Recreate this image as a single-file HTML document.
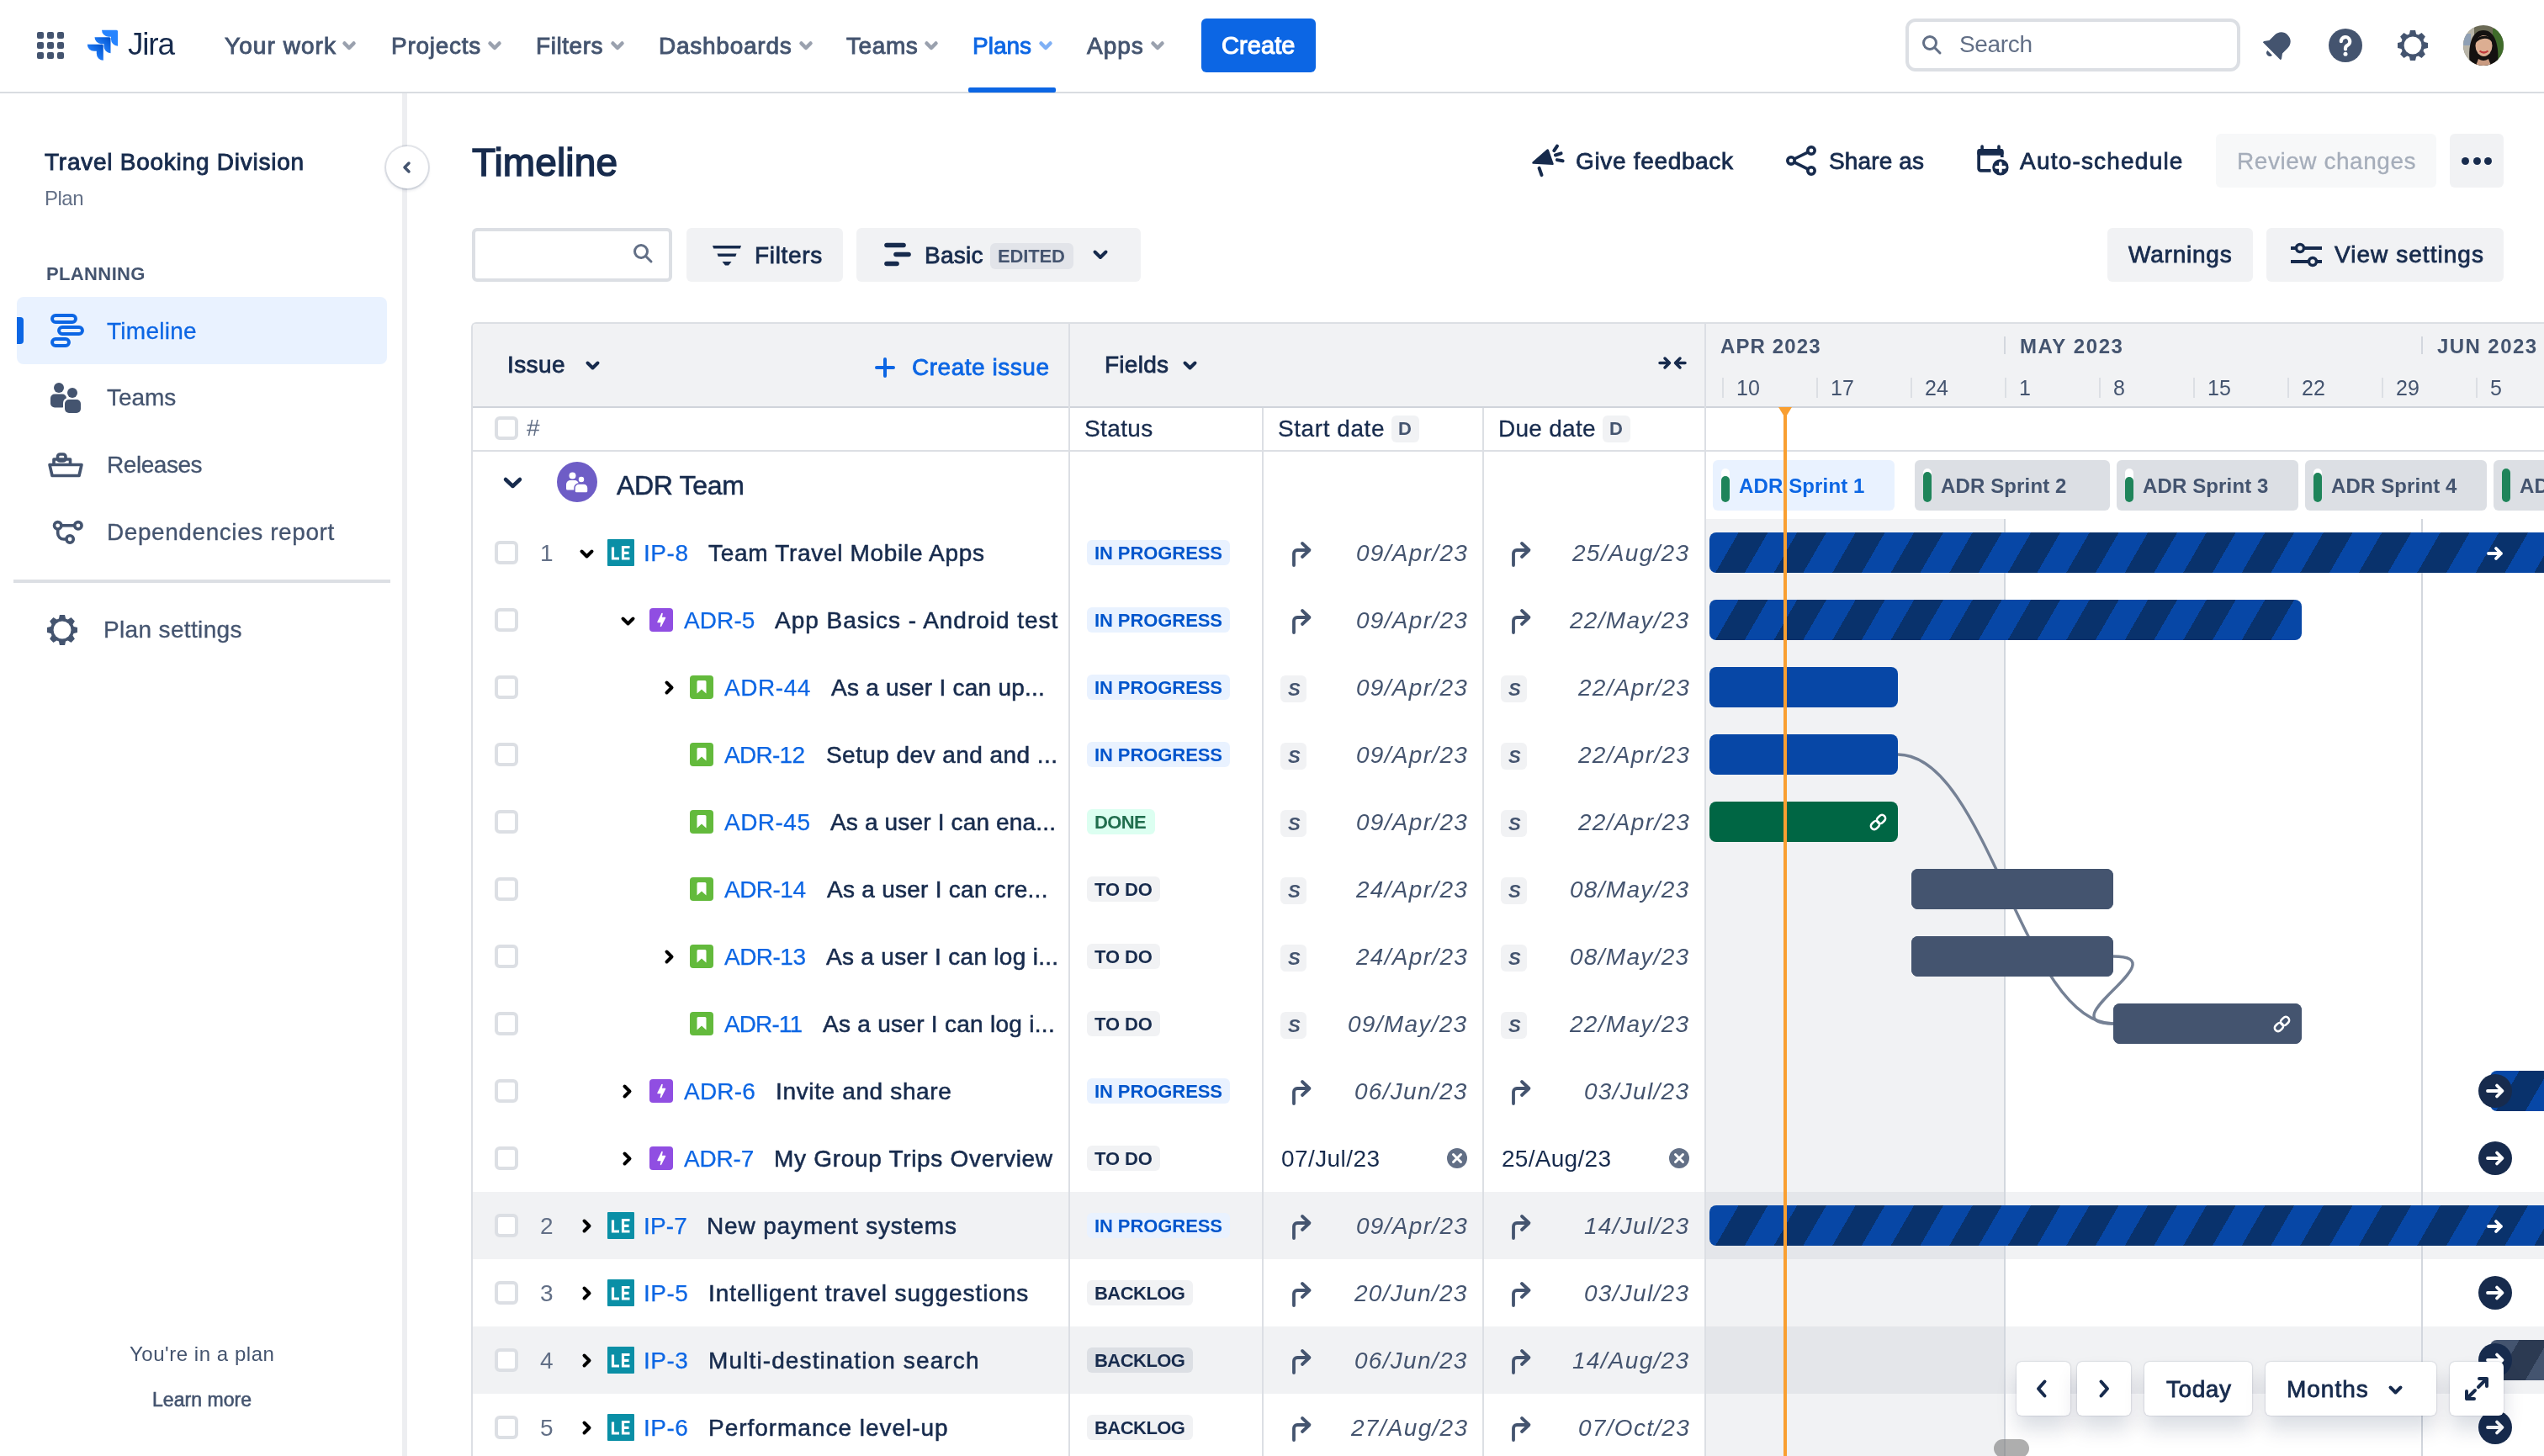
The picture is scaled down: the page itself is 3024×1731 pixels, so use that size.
<!DOCTYPE html>
<html><head><meta charset="utf-8"><title>Timeline - Jira</title>
<style>
html,body{margin:0;padding:0;}
body{width:3024px;height:1731px;overflow:hidden;position:relative;background:#ffffff;font-family:"Liberation Sans", sans-serif;}
div,svg{box-sizing:border-box;}
.t{will-change:transform;}
@media (max-width:1700px){html{zoom:0.5;}}
</style></head><body>
<div style="position:absolute;left:0px;top:109px;width:3024px;height:2px;background:#d9dce1;border-radius:0px;"></div>
<div style="position:absolute;left:44px;top:38px;width:8px;height:8px;background:#44546f;border-radius:2px;"></div>
<div style="position:absolute;left:56px;top:38px;width:8px;height:8px;background:#44546f;border-radius:2px;"></div>
<div style="position:absolute;left:68px;top:38px;width:8px;height:8px;background:#44546f;border-radius:2px;"></div>
<div style="position:absolute;left:44px;top:50px;width:8px;height:8px;background:#44546f;border-radius:2px;"></div>
<div style="position:absolute;left:56px;top:50px;width:8px;height:8px;background:#44546f;border-radius:2px;"></div>
<div style="position:absolute;left:68px;top:50px;width:8px;height:8px;background:#44546f;border-radius:2px;"></div>
<div style="position:absolute;left:44px;top:62px;width:8px;height:8px;background:#44546f;border-radius:2px;"></div>
<div style="position:absolute;left:56px;top:62px;width:8px;height:8px;background:#44546f;border-radius:2px;"></div>
<div style="position:absolute;left:68px;top:62px;width:8px;height:8px;background:#44546f;border-radius:2px;"></div>
<svg style="position:absolute;left:104px;top:36px;overflow:visible;" width="36" height="36" viewBox="0 0 36 36"><defs><linearGradient id="jg1" x1="1" y1="0.1" x2="0.35" y2="0.75"><stop offset="0" stop-color="#0052cc"/><stop offset="1" stop-color="#2684ff"/></linearGradient></defs>
<path d="M19 0 H0 a8 8 0 0 0 8 8 h3 v3 a8 8 0 0 0 8 8 V1.5 A1.5 1.5 0 0 0 17.5 0z" fill="#2684ff" transform="translate(17,-0.3)"/>
<path d="M19 0 H0 a8 8 0 0 0 8 8 h3 v3 a8 8 0 0 0 8 8 V1.5 A1.5 1.5 0 0 0 17.5 0z" fill="url(#jg1)" transform="translate(8.5,8.2)"/>
<path d="M19 0 H0 a8 8 0 0 0 8 8 h3 v3 a8 8 0 0 0 8 8 V1.5 A1.5 1.5 0 0 0 17.5 0z" fill="url(#jg1)" transform="translate(-0.2,16.8)"/></svg>
<div class="t" style="position:absolute;left:152.0px;top:29.2px;line-height:48px;font-size:37px;font-weight:400;font-style:normal;color:#172b4d;letter-spacing:-1.21px;white-space:pre;">Jira</div>
<div class="t" style="position:absolute;left:267.0px;top:36.8px;line-height:36px;font-size:28px;font-weight:400;font-style:normal;color:#44546f;letter-spacing:1.06px;white-space:pre;-webkit-text-stroke:0.9px #44546f;">Your work</div>
<svg style="position:absolute;left:407px;top:49px;overflow:visible;" width="16" height="12" viewBox="0 0 16 12"><path d="M2.5 2.5 L8 8 L13.5 2.5" fill="none" stroke="#9aa1ae" stroke-width="4.5" stroke-linecap="round" stroke-linejoin="round"/></svg>
<div class="t" style="position:absolute;left:464.5px;top:36.8px;line-height:36px;font-size:28px;font-weight:400;font-style:normal;color:#44546f;letter-spacing:0.73px;white-space:pre;-webkit-text-stroke:0.9px #44546f;">Projects</div>
<svg style="position:absolute;left:580px;top:49px;overflow:visible;" width="16" height="12" viewBox="0 0 16 12"><path d="M2.5 2.5 L8 8 L13.5 2.5" fill="none" stroke="#9aa1ae" stroke-width="4.5" stroke-linecap="round" stroke-linejoin="round"/></svg>
<div class="t" style="position:absolute;left:637.4px;top:36.8px;line-height:36px;font-size:28px;font-weight:400;font-style:normal;color:#44546f;letter-spacing:0.56px;white-space:pre;-webkit-text-stroke:0.9px #44546f;">Filters</div>
<svg style="position:absolute;left:726px;top:49px;overflow:visible;" width="16" height="12" viewBox="0 0 16 12"><path d="M2.5 2.5 L8 8 L13.5 2.5" fill="none" stroke="#9aa1ae" stroke-width="4.5" stroke-linecap="round" stroke-linejoin="round"/></svg>
<div class="t" style="position:absolute;left:782.7px;top:36.8px;line-height:36px;font-size:28px;font-weight:400;font-style:normal;color:#44546f;letter-spacing:0.75px;white-space:pre;-webkit-text-stroke:0.9px #44546f;">Dashboards</div>
<svg style="position:absolute;left:949.5px;top:49px;overflow:visible;" width="16" height="12" viewBox="0 0 16 12"><path d="M2.5 2.5 L8 8 L13.5 2.5" fill="none" stroke="#9aa1ae" stroke-width="4.5" stroke-linecap="round" stroke-linejoin="round"/></svg>
<div class="t" style="position:absolute;left:1006.0px;top:36.8px;line-height:36px;font-size:28px;font-weight:400;font-style:normal;color:#44546f;letter-spacing:0.58px;white-space:pre;-webkit-text-stroke:0.9px #44546f;">Teams</div>
<svg style="position:absolute;left:1099px;top:49px;overflow:visible;" width="16" height="12" viewBox="0 0 16 12"><path d="M2.5 2.5 L8 8 L13.5 2.5" fill="none" stroke="#9aa1ae" stroke-width="4.5" stroke-linecap="round" stroke-linejoin="round"/></svg>
<div class="t" style="position:absolute;left:1156.0px;top:36.8px;line-height:36px;font-size:28px;font-weight:400;font-style:normal;color:#0c66e4;letter-spacing:-0.01px;white-space:pre;-webkit-text-stroke:0.9px #0c66e4;">Plans</div>
<svg style="position:absolute;left:1235px;top:49px;overflow:visible;" width="16" height="12" viewBox="0 0 16 12"><path d="M2.5 2.5 L8 8 L13.5 2.5" fill="none" stroke="#7fb0f5" stroke-width="4.5" stroke-linecap="round" stroke-linejoin="round"/></svg>
<div class="t" style="position:absolute;left:1292.0px;top:36.8px;line-height:36px;font-size:28px;font-weight:400;font-style:normal;color:#44546f;letter-spacing:0.96px;white-space:pre;-webkit-text-stroke:0.9px #44546f;">Apps</div>
<svg style="position:absolute;left:1368px;top:49px;overflow:visible;" width="16" height="12" viewBox="0 0 16 12"><path d="M2.5 2.5 L8 8 L13.5 2.5" fill="none" stroke="#9aa1ae" stroke-width="4.5" stroke-linecap="round" stroke-linejoin="round"/></svg>
<div style="position:absolute;left:1151px;top:104px;width:104px;height:6px;background:#0c66e4;border-radius:2px;"></div>
<div style="position:absolute;left:1428px;top:22px;width:136px;height:64px;background:#0c66e4;border-radius:6px;"></div>
<div class="t" style="position:absolute;left:1451.6px;top:34.9px;line-height:38px;font-size:29px;font-weight:400;font-style:normal;color:#ffffff;letter-spacing:0.07px;white-space:pre;-webkit-text-stroke:1.1px #ffffff;">Create</div>
<div style="position:absolute;left:2265px;top:22px;width:398px;height:63px;border:4px solid #dcdfe4;border-radius:12px;background:#fff"></div>
<svg style="position:absolute;left:2284px;top:41px;overflow:visible;" width="24" height="24" viewBox="0 0 24 24"><circle cx="10" cy="10" r="7.5" fill="none" stroke="#626f86" stroke-width="3"/><path d="M15.5 15.5 L22 22" stroke="#626f86" stroke-width="3" stroke-linecap="round"/></svg>
<div class="t" style="position:absolute;left:2328.7px;top:35.3px;line-height:36px;font-size:28px;font-weight:400;font-style:normal;color:#626f86;letter-spacing:-0.34px;white-space:pre;">Search</div>
<svg style="position:absolute;left:2686px;top:33px;overflow:visible;" width="42" height="42" viewBox="0 0 42 42"><g transform="rotate(45 21 21)" fill="#44546f"><path d="M21 3.5c-6.8 0-11 5-11 11.5v8.5l-3.8 5.2v1.8h29.6v-1.8l-3.8-5.2v-8.5C32 8.5 27.8 3.5 21 3.5z"/><path d="M17 33.5 h8 a4 4 0 0 1 -8 0z"/></g></svg>
<svg style="position:absolute;left:2768px;top:34px;overflow:visible;" width="40" height="40" viewBox="0 0 40 40"><circle cx="20" cy="20" r="20" fill="#44546f"/><path d="M14.8 15.2a5.2 5.2 0 1 1 7.6 4.6c-1.5.8-2.4 1.6-2.4 3.4v1.2" fill="none" stroke="#fff" stroke-width="4.2" stroke-linecap="round"/><circle cx="20" cy="30.2" r="2.5" fill="#fff"/></svg>
<svg style="position:absolute;left:2849.5px;top:35.5px;overflow:visible;" width="36" height="36" viewBox="0 0 36 36"><g transform="translate(18.0,18.0)"><path d="M-4.68 -10.80 L-3.06 -18.00 H3.06 L4.68 -10.80Z" fill="#44546f" transform="rotate(0)"/><path d="M-4.68 -10.80 L-3.06 -18.00 H3.06 L4.68 -10.80Z" fill="#44546f" transform="rotate(45)"/><path d="M-4.68 -10.80 L-3.06 -18.00 H3.06 L4.68 -10.80Z" fill="#44546f" transform="rotate(90)"/><path d="M-4.68 -10.80 L-3.06 -18.00 H3.06 L4.68 -10.80Z" fill="#44546f" transform="rotate(135)"/><path d="M-4.68 -10.80 L-3.06 -18.00 H3.06 L4.68 -10.80Z" fill="#44546f" transform="rotate(180)"/><path d="M-4.68 -10.80 L-3.06 -18.00 H3.06 L4.68 -10.80Z" fill="#44546f" transform="rotate(225)"/><path d="M-4.68 -10.80 L-3.06 -18.00 H3.06 L4.68 -10.80Z" fill="#44546f" transform="rotate(270)"/><path d="M-4.68 -10.80 L-3.06 -18.00 H3.06 L4.68 -10.80Z" fill="#44546f" transform="rotate(315)"/><circle r="14.04" fill="#44546f"/><circle r="10.44" fill="#fff"/></g></svg>
<svg style="position:absolute;left:2928px;top:30px;overflow:visible;" width="48" height="48" viewBox="0 0 48 48"><defs><clipPath id="av"><circle cx="24" cy="24" r="24"/></clipPath></defs><g clip-path="url(#av)"><rect width="48" height="48" fill="#6b6a55"/><rect x="0" y="0" width="13" height="48" fill="#b9b5a8"/><rect x="0" y="10" width="9" height="14" fill="#8fa0b5"/><rect x="35" y="4" width="13" height="40" fill="#3f6b2a"/><path d="M8 48 C5 24 10 6 24 6 C38 6 43 24 41 48z" fill="#141110"/><ellipse cx="24.5" cy="24.5" rx="10" ry="12.5" fill="#dcae92"/><path d="M14 22 C14 11 34 9 35 21 C31 14 20 14 14 22z" fill="#141110"/><path d="M19.5 30.5 Q24.5 34.5 29.5 30.5" stroke="#c0393b" stroke-width="2.2" fill="none"/><path d="M18 40 Q24 44 30 40 L33 48 H15z" fill="#c99a80"/></g></svg>
<div style="position:absolute;left:478px;top:111px;width:6px;height:1620px;background:#edeef1;border-radius:0px;"></div>
<div class="t" style="position:absolute;left:53.0px;top:174.9px;line-height:36px;font-size:28px;font-weight:400;font-style:normal;color:#172b4d;letter-spacing:0.75px;white-space:pre;-webkit-text-stroke:0.9px #172b4d;">Travel Booking Division</div>
<div class="t" style="position:absolute;left:53.0px;top:220.2px;line-height:31px;font-size:24px;font-weight:400;font-style:normal;color:#626f86;letter-spacing:-0.52px;white-space:pre;">Plan</div>
<div class="t" style="position:absolute;left:55.0px;top:310.9px;line-height:29px;font-size:22px;font-weight:700;font-style:normal;color:#44546f;letter-spacing:0.37px;white-space:pre;">PLANNING</div>
<div style="position:absolute;left:20px;top:353px;width:440px;height:80px;background:#e9f2ff;border-radius:8px;"></div>
<div style="position:absolute;left:20px;top:377px;width:8px;height:32px;background:#0c66e4;border-radius:3px;border-radius:0 4px 4px 0;"></div>
<svg style="position:absolute;left:60px;top:373px;overflow:visible;" width="36" height="40" viewBox="0 0 36 40"><g fill="none" stroke="#0c66e4" stroke-width="3.9"><rect x="2" y="2" width="28" height="8" rx="4"/><rect x="10" y="16" width="28" height="8" rx="4"/><rect x="2" y="30" width="20" height="8" rx="4"/></g></svg>
<div class="t" style="position:absolute;left:127.0px;top:375.7px;line-height:36px;font-size:28px;font-weight:400;font-style:normal;color:#0c66e4;letter-spacing:0.26px;white-space:pre;-webkit-text-stroke:0.3px #0c66e4;">Timeline</div>
<svg style="position:absolute;left:58px;top:452px;overflow:visible;" width="40" height="40" viewBox="0 0 40 40"><g fill="#44546f"><circle cx="12" cy="9" r="6"/><rect x="2" y="16.5" width="19" height="16" rx="5"/><circle cx="28" cy="15" r="6"/></g><rect x="17" y="21" width="23" height="19" rx="6" fill="#fff"/><rect x="19" y="23" width="19" height="16" rx="5" fill="#44546f"/></svg>
<div class="t" style="position:absolute;left:126.6px;top:455.3px;line-height:36px;font-size:28px;font-weight:400;font-style:normal;color:#44546f;letter-spacing:-0.04px;white-space:pre;-webkit-text-stroke:0.3px #44546f;">Teams</div>
<svg style="position:absolute;left:56px;top:536px;overflow:visible;" width="44" height="34" viewBox="0 0 44 34"><g fill="none" stroke="#44546f" stroke-width="3.6" stroke-linejoin="round"><rect x="12.5" y="4" width="9.5" height="8" rx="3"/><path d="M8 16 V10 H27.5 V16"/><path d="M3 16.5 H41 L38 29.5 H6 Z"/></g></svg>
<div class="t" style="position:absolute;left:126.6px;top:535.3px;line-height:36px;font-size:28px;font-weight:400;font-style:normal;color:#44546f;letter-spacing:-0.45px;white-space:pre;-webkit-text-stroke:0.3px #44546f;">Releases</div>
<svg style="position:absolute;left:60px;top:616px;overflow:visible;" width="40" height="32" viewBox="0 0 40 32"><g fill="none" stroke="#44546f" stroke-width="3.6"><circle cx="8.7" cy="8.8" r="4.2"/><circle cx="32.9" cy="8.8" r="4.2"/><circle cx="23.1" cy="25" r="4.2"/><path d="M12.9 8.8 H28.7"/><path d="M8.7 13 V18 a7 7 0 0 0 7 7 H18.9"/></g></svg>
<div class="t" style="position:absolute;left:126.6px;top:615.3px;line-height:36px;font-size:28px;font-weight:400;font-style:normal;color:#44546f;letter-spacing:0.57px;white-space:pre;-webkit-text-stroke:0.3px #44546f;">Dependencies report</div>
<div style="position:absolute;left:16px;top:689px;width:448px;height:4px;background:#dcdfe4;border-radius:0px;"></div>
<svg style="position:absolute;left:55.6px;top:731px;overflow:visible;" width="36" height="36" viewBox="0 0 36 36"><g transform="translate(18.0,18.0)"><path d="M-4.68 -10.80 L-3.06 -18.00 H3.06 L4.68 -10.80Z" fill="#44546f" transform="rotate(0)"/><path d="M-4.68 -10.80 L-3.06 -18.00 H3.06 L4.68 -10.80Z" fill="#44546f" transform="rotate(45)"/><path d="M-4.68 -10.80 L-3.06 -18.00 H3.06 L4.68 -10.80Z" fill="#44546f" transform="rotate(90)"/><path d="M-4.68 -10.80 L-3.06 -18.00 H3.06 L4.68 -10.80Z" fill="#44546f" transform="rotate(135)"/><path d="M-4.68 -10.80 L-3.06 -18.00 H3.06 L4.68 -10.80Z" fill="#44546f" transform="rotate(180)"/><path d="M-4.68 -10.80 L-3.06 -18.00 H3.06 L4.68 -10.80Z" fill="#44546f" transform="rotate(225)"/><path d="M-4.68 -10.80 L-3.06 -18.00 H3.06 L4.68 -10.80Z" fill="#44546f" transform="rotate(270)"/><path d="M-4.68 -10.80 L-3.06 -18.00 H3.06 L4.68 -10.80Z" fill="#44546f" transform="rotate(315)"/><circle r="14.04" fill="#44546f"/><circle r="10.44" fill="#fff"/></g></svg>
<div class="t" style="position:absolute;left:122.7px;top:731.3px;line-height:36px;font-size:28px;font-weight:400;font-style:normal;color:#44546f;letter-spacing:0.35px;white-space:pre;-webkit-text-stroke:0.3px #44546f;">Plan settings</div>
<div class="t" style="position:absolute;left:154.0px;top:1594.0px;line-height:31px;font-size:24px;font-weight:400;font-style:normal;color:#44546f;letter-spacing:0.54px;white-space:pre;">You're in a plan</div>
<div class="t" style="position:absolute;left:181.0px;top:1648.7px;line-height:30px;font-size:23px;font-weight:400;font-style:normal;color:#44546f;letter-spacing:0.04px;white-space:pre;-webkit-text-stroke:0.6px #44546f;">Learn more</div>
<div style="position:absolute;left:459px;top:174px;width:50px;height:50px;border-radius:25px;background:#fff;box-shadow:0 0 0 2px rgba(9,30,66,0.10),0 2px 4px rgba(9,30,66,0.15)"></div>
<svg style="position:absolute;left:476px;top:191px;overflow:visible;" width="16" height="16" viewBox="0 0 16 16"><path d="M10 3 L5 8 L10 13" fill="none" stroke="#44546f" stroke-width="3.5" stroke-linecap="round" stroke-linejoin="round"/></svg>
<div class="t" style="position:absolute;left:561.0px;top:162.5px;line-height:60px;font-size:46px;font-weight:400;font-style:normal;color:#172b4d;letter-spacing:0.12px;white-space:pre;-webkit-text-stroke:1.5px #172b4d;">Timeline</div>
<svg style="position:absolute;left:1810px;top:160px;overflow:visible;" width="60" height="60" viewBox="0 0 60 60"><path d="M12.5 33.5 L29.7 18.5 L35.5 34.8 Z" fill="#172b4d" stroke="#172b4d" stroke-width="2.5" stroke-linejoin="round"/><g stroke="#172b4d" stroke-width="4" stroke-linecap="round"><path d="M19.6 39.8 L22.5 48.2"/><path d="M41 13.6 L37.3 19.2"/><path d="M38.9 24.5 L45.6 22.3"/><path d="M40.9 30.1 L47.6 31.3"/></g></svg>
<div class="t" style="position:absolute;left:1873.0px;top:173.9px;line-height:36px;font-size:28px;font-weight:400;font-style:normal;color:#172b4d;letter-spacing:0.67px;white-space:pre;-webkit-text-stroke:0.8px #172b4d;">Give feedback</div>
<svg style="position:absolute;left:2110px;top:160px;overflow:visible;" width="60" height="60" viewBox="0 0 60 60"><g fill="none" stroke="#172b4d" stroke-width="3.6"><circle cx="43" cy="19" r="4.2"/><circle cx="19" cy="30.9" r="4.2"/><circle cx="43" cy="43" r="4.2"/><path d="M22.8 29 L39.2 20.9"/><path d="M22.8 32.8 L39.2 41.1"/></g></svg>
<div class="t" style="position:absolute;left:2174.0px;top:173.9px;line-height:36px;font-size:28px;font-weight:400;font-style:normal;color:#172b4d;letter-spacing:0.13px;white-space:pre;-webkit-text-stroke:0.8px #172b4d;">Share as</div>
<svg style="position:absolute;left:2340px;top:160px;overflow:visible;" width="60" height="60" viewBox="0 0 60 60"><path d="M26.5 42.85 H14.65 a2.5 2.5 0 0 1 -2.5 -2.5 V21.25 a2.5 2.5 0 0 1 2.5 -2.5 H37.25 a2.5 2.5 0 0 1 2.5 2.5 V27" fill="none" stroke="#172b4d" stroke-width="3.7"/><rect x="10.3" y="16.9" width="31.3" height="7.8" rx="2.5" fill="#172b4d"/><path d="M16.1 14 V18 M36 14 V18" stroke="#172b4d" stroke-width="3.6" stroke-linecap="round"/><circle cx="37.9" cy="38.9" r="11.2" fill="#fff"/><circle cx="37.9" cy="38.9" r="9.7" fill="#172b4d"/><path d="M37.9 34 V43.8 M33 38.9 H42.8" stroke="#fff" stroke-width="3.6" stroke-linecap="round"/></svg>
<div class="t" style="position:absolute;left:2400.6px;top:173.9px;line-height:36px;font-size:28px;font-weight:400;font-style:normal;color:#172b4d;letter-spacing:1.20px;white-space:pre;-webkit-text-stroke:0.8px #172b4d;">Auto-schedule</div>
<div style="position:absolute;left:2634px;top:159px;width:262px;height:64px;background:#f7f8f9;border-radius:6px;"></div>
<div class="t" style="position:absolute;left:2659.0px;top:173.9px;line-height:36px;font-size:28px;font-weight:400;font-style:normal;color:#a5adba;letter-spacing:0.55px;white-space:pre;-webkit-text-stroke:0.3px #a5adba;">Review changes</div>
<div style="position:absolute;left:2912px;top:159px;width:64px;height:64px;background:#f1f2f4;border-radius:6px;"></div>
<div style="position:absolute;left:2926px;top:186.5px;width:9px;height:9px;background:#172b4d;border-radius:4.5px;"></div>
<div style="position:absolute;left:2939.5px;top:186.5px;width:9px;height:9px;background:#172b4d;border-radius:4.5px;"></div>
<div style="position:absolute;left:2953px;top:186.5px;width:9px;height:9px;background:#172b4d;border-radius:4.5px;"></div>
<div style="position:absolute;left:561px;top:271px;width:238px;height:64px;border:4px solid #dcdfe4;border-radius:6px;background:#fff"></div>
<svg style="position:absolute;left:752px;top:289px;overflow:visible;" width="24" height="24" viewBox="0 0 24 24"><circle cx="10" cy="10" r="7.5" fill="none" stroke="#626f86" stroke-width="3"/><path d="M15.5 15.5 L22 22" stroke="#626f86" stroke-width="3" stroke-linecap="round"/></svg>
<div style="position:absolute;left:816px;top:271px;width:186px;height:64px;background:#f1f2f4;border-radius:6px;"></div>
<svg style="position:absolute;left:846px;top:290px;overflow:visible;" width="36" height="26" viewBox="0 0 36 26"><path d="M1 2 H35 L33.8 5.6 H2.2 Z" fill="#172b4d"/><path d="M6.5 11.5 H29.5 L28.3 15 H7.7 Z" fill="#172b4d"/><path d="M12.5 21 H23.5 L20 25.5 H16 Z" fill="#172b4d"/></svg>
<div class="t" style="position:absolute;left:896.7px;top:285.9px;line-height:36px;font-size:28px;font-weight:400;font-style:normal;color:#172b4d;letter-spacing:0.68px;white-space:pre;-webkit-text-stroke:0.8px #172b4d;">Filters</div>
<div style="position:absolute;left:1018px;top:271px;width:338px;height:64px;background:#f1f2f4;border-radius:6px;"></div>
<svg style="position:absolute;left:1051px;top:288px;overflow:visible;" width="32" height="30" viewBox="0 0 32 30"><g stroke="#172b4d" stroke-width="5.6" stroke-linecap="round"><path d="M3 3.5 H23"/><path d="M14 14.5 H29"/><path d="M3 25.5 H15"/></g></svg>
<div class="t" style="position:absolute;left:1098.5px;top:285.9px;line-height:36px;font-size:28px;font-weight:400;font-style:normal;color:#172b4d;letter-spacing:0.26px;white-space:pre;-webkit-text-stroke:0.8px #172b4d;">Basic</div>
<div style="position:absolute;left:1177px;top:289px;width:99px;height:31px;background:#e2e4e9;border-radius:6px;"></div>
<div class="t" style="position:absolute;left:1186.0px;top:290.4px;line-height:29px;font-size:22px;font-weight:700;font-style:normal;color:#44546f;letter-spacing:-0.14px;white-space:pre;">EDITED</div>
<svg style="position:absolute;left:1299px;top:297px;overflow:visible;" width="18" height="12" viewBox="0 0 18 12"><path d="M2.5 2.5 L9 9 L15.5 2.5" fill="none" stroke="#172b4d" stroke-width="4" stroke-linecap="round" stroke-linejoin="round"/></svg>
<div style="position:absolute;left:2505px;top:271px;width:173px;height:64px;background:#f1f2f4;border-radius:6px;"></div>
<div class="t" style="position:absolute;left:2530.0px;top:285.3px;line-height:36px;font-size:28px;font-weight:400;font-style:normal;color:#172b4d;letter-spacing:0.78px;white-space:pre;-webkit-text-stroke:0.8px #172b4d;">Warnings</div>
<div style="position:absolute;left:2694px;top:271px;width:282px;height:64px;background:#f1f2f4;border-radius:6px;"></div>
<svg style="position:absolute;left:2723px;top:290px;overflow:visible;" width="37" height="26" viewBox="0 0 37 26"><g stroke="#172b4d" stroke-width="4" fill="none"><path d="M0 5 H37"/><path d="M0 21 H37"/></g><circle cx="11" cy="5" r="4.5" fill="#f1f2f4" stroke="#172b4d" stroke-width="3.5"/><circle cx="26" cy="21" r="4.5" fill="#f1f2f4" stroke="#172b4d" stroke-width="3.5"/></svg>
<div class="t" style="position:absolute;left:2774.5px;top:285.3px;line-height:36px;font-size:28px;font-weight:400;font-style:normal;color:#172b4d;letter-spacing:1.04px;white-space:pre;-webkit-text-stroke:0.8px #172b4d;">View settings</div>
<div style="position:absolute;left:560px;top:383px;width:2480px;height:1400px;border-left:2px solid #dcdfe4;border-top:2px solid #dcdfe4;border-top-left-radius:6px;"></div>
<div style="position:absolute;left:562px;top:385px;width:2462px;height:98px;background:#f1f2f4;border-radius:0px;border-top-left-radius:4px;"></div>
<div style="position:absolute;left:562px;top:483px;width:2462px;height:2px;background:#d0d4db;border-radius:0px;"></div>
<div style="position:absolute;left:562px;top:535px;width:2462px;height:2px;background:#dcdfe4;border-radius:0px;"></div>
<div style="position:absolute;left:2028px;top:617px;width:354px;height:1114px;background:#f1f2f4;border-radius:0px;"></div>
<div style="position:absolute;left:562px;top:1417px;width:2462px;height:80px;background:#f1f2f4;border-radius:0px;"></div>
<div style="position:absolute;left:2028px;top:1417px;width:354px;height:80px;background:#e4e6ea;border-radius:0px;"></div>
<div style="position:absolute;left:562px;top:1577px;width:2462px;height:80px;background:#f1f2f4;border-radius:0px;"></div>
<div style="position:absolute;left:2028px;top:1577px;width:354px;height:80px;background:#e4e6ea;border-radius:0px;"></div>
<div style="position:absolute;left:2382px;top:400px;width:2px;height:21px;background:#d3d7de;border-radius:0px;"></div>
<div style="position:absolute;left:2878px;top:400px;width:2px;height:21px;background:#d3d7de;border-radius:0px;"></div>
<div style="position:absolute;left:2382px;top:617px;width:2px;height:1114px;background:#d3d7de;border-radius:0px;"></div>
<div style="position:absolute;left:2878px;top:617px;width:2px;height:1114px;background:#d3d7de;border-radius:0px;"></div>
<div style="position:absolute;left:2047px;top:449px;width:2px;height:24px;background:#dcdfe4;border-radius:0px;"></div>
<div style="position:absolute;left:2159px;top:449px;width:2px;height:24px;background:#dcdfe4;border-radius:0px;"></div>
<div style="position:absolute;left:2271px;top:449px;width:2px;height:24px;background:#dcdfe4;border-radius:0px;"></div>
<div style="position:absolute;left:2383px;top:449px;width:2px;height:24px;background:#dcdfe4;border-radius:0px;"></div>
<div style="position:absolute;left:2495px;top:449px;width:2px;height:24px;background:#dcdfe4;border-radius:0px;"></div>
<div style="position:absolute;left:2607px;top:449px;width:2px;height:24px;background:#dcdfe4;border-radius:0px;"></div>
<div style="position:absolute;left:2719px;top:449px;width:2px;height:24px;background:#dcdfe4;border-radius:0px;"></div>
<div style="position:absolute;left:2831px;top:449px;width:2px;height:24px;background:#dcdfe4;border-radius:0px;"></div>
<div style="position:absolute;left:2943px;top:449px;width:2px;height:24px;background:#dcdfe4;border-radius:0px;"></div>
<div style="position:absolute;left:1270px;top:385px;width:2px;height:1346px;background:#dcdfe4;border-radius:0px;"></div>
<div style="position:absolute;left:2026px;top:385px;width:2px;height:1346px;background:#dcdfe4;border-radius:0px;"></div>
<div style="position:absolute;left:1500px;top:485px;width:2px;height:1246px;background:#dcdfe4;border-radius:0px;"></div>
<div style="position:absolute;left:1762px;top:485px;width:2px;height:1246px;background:#dcdfe4;border-radius:0px;"></div>
<div class="t" style="position:absolute;left:602.5px;top:416.3px;line-height:36px;font-size:28px;font-weight:400;font-style:normal;color:#172b4d;letter-spacing:0.39px;white-space:pre;-webkit-text-stroke:0.8px #172b4d;">Issue</div>
<svg style="position:absolute;left:696px;top:429px;overflow:visible;" width="17" height="12" viewBox="0 0 17 12"><path d="M2.5 2.5 L8.5 8.5 L14.5 2.5" fill="none" stroke="#172b4d" stroke-width="4" stroke-linecap="round" stroke-linejoin="round"/></svg>
<svg style="position:absolute;left:1040px;top:425px;overflow:visible;" width="24" height="24" viewBox="0 0 24 24"><path d="M12 2 V22 M2 12 H22" stroke="#0c66e4" stroke-width="4" stroke-linecap="round"/></svg>
<div class="t" style="position:absolute;left:1084.0px;top:419.3px;line-height:36px;font-size:28px;font-weight:400;font-style:normal;color:#0c66e4;letter-spacing:0.53px;white-space:pre;-webkit-text-stroke:0.8px #0c66e4;">Create issue</div>
<div class="t" style="position:absolute;left:1312.7px;top:416.3px;line-height:36px;font-size:28px;font-weight:400;font-style:normal;color:#172b4d;letter-spacing:0.26px;white-space:pre;-webkit-text-stroke:0.8px #172b4d;">Fields</div>
<svg style="position:absolute;left:1406px;top:429px;overflow:visible;" width="17" height="12" viewBox="0 0 17 12"><path d="M2.5 2.5 L8.5 8.5 L14.5 2.5" fill="none" stroke="#172b4d" stroke-width="4" stroke-linecap="round" stroke-linejoin="round"/></svg>
<svg style="position:absolute;left:1971px;top:423px;overflow:visible;" width="34" height="17" viewBox="0 0 34 17"><g fill="none" stroke="#172b4d" stroke-width="3.5" stroke-linecap="round" stroke-linejoin="round"><path d="M2 8.5 H13 M8 3 L13.5 8.5 L8 14"/><path d="M32 8.5 H21 M26 3 L20.5 8.5 L26 14"/></g></svg>
<div style="position:absolute;left:588px;top:495px;width:28px;height:28px;border:4px solid #dcdfe4;border-radius:6px;background:#fff"></div>
<div class="t" style="position:absolute;left:626.0px;top:491.3px;line-height:36px;font-size:28px;font-weight:400;font-style:normal;color:#626f86;letter-spacing:0.00px;white-space:pre;">#</div>
<div class="t" style="position:absolute;left:1288.5px;top:491.9px;line-height:36px;font-size:28px;font-weight:400;font-style:normal;color:#172b4d;letter-spacing:0.38px;white-space:pre;-webkit-text-stroke:0.3px #172b4d;">Status</div>
<div class="t" style="position:absolute;left:1518.5px;top:491.9px;line-height:36px;font-size:28px;font-weight:400;font-style:normal;color:#172b4d;letter-spacing:0.57px;white-space:pre;-webkit-text-stroke:0.3px #172b4d;">Start date</div>
<div style="position:absolute;left:1654px;top:494px;width:33px;height:32px;background:#f1f2f4;border-radius:6px;"></div>
<div class="t" style="position:absolute;left:1662.0px;top:495.4px;line-height:29px;font-size:22px;font-weight:700;font-style:normal;color:#44546f;letter-spacing:0.00px;white-space:pre;">D</div>
<div class="t" style="position:absolute;left:1780.5px;top:491.9px;line-height:36px;font-size:28px;font-weight:400;font-style:normal;color:#172b4d;letter-spacing:0.27px;white-space:pre;-webkit-text-stroke:0.3px #172b4d;">Due date</div>
<div style="position:absolute;left:1905px;top:494px;width:33px;height:32px;background:#f1f2f4;border-radius:6px;"></div>
<div class="t" style="position:absolute;left:1913.0px;top:495.4px;line-height:29px;font-size:22px;font-weight:700;font-style:normal;color:#44546f;letter-spacing:0.00px;white-space:pre;">D</div>
<div class="t" style="position:absolute;left:2044.5px;top:395.7px;line-height:31px;font-size:24px;font-weight:700;font-style:normal;color:#44546f;letter-spacing:1.11px;white-space:pre;">APR 2023</div>
<div class="t" style="position:absolute;left:2401.0px;top:395.7px;line-height:31px;font-size:24px;font-weight:700;font-style:normal;color:#44546f;letter-spacing:1.60px;white-space:pre;">MAY 2023</div>
<div class="t" style="position:absolute;left:2897.0px;top:395.7px;line-height:31px;font-size:24px;font-weight:700;font-style:normal;color:#44546f;letter-spacing:1.42px;white-space:pre;">JUN 2023</div>
<div class="t" style="position:absolute;left:2064.3px;top:444.9px;line-height:32px;font-size:25px;font-weight:400;font-style:normal;color:#44546f;letter-spacing:0.00px;white-space:pre;">10</div>
<div class="t" style="position:absolute;left:2176.3px;top:444.9px;line-height:32px;font-size:25px;font-weight:400;font-style:normal;color:#44546f;letter-spacing:0.00px;white-space:pre;">17</div>
<div class="t" style="position:absolute;left:2288.3px;top:444.9px;line-height:32px;font-size:25px;font-weight:400;font-style:normal;color:#44546f;letter-spacing:0.00px;white-space:pre;">24</div>
<div class="t" style="position:absolute;left:2400.3px;top:444.9px;line-height:32px;font-size:25px;font-weight:400;font-style:normal;color:#44546f;letter-spacing:0.00px;white-space:pre;">1</div>
<div class="t" style="position:absolute;left:2512.3px;top:444.9px;line-height:32px;font-size:25px;font-weight:400;font-style:normal;color:#44546f;letter-spacing:0.00px;white-space:pre;">8</div>
<div class="t" style="position:absolute;left:2624.3px;top:444.9px;line-height:32px;font-size:25px;font-weight:400;font-style:normal;color:#44546f;letter-spacing:0.00px;white-space:pre;">15</div>
<div class="t" style="position:absolute;left:2736.3px;top:444.9px;line-height:32px;font-size:25px;font-weight:400;font-style:normal;color:#44546f;letter-spacing:0.00px;white-space:pre;">22</div>
<div class="t" style="position:absolute;left:2848.3px;top:444.9px;line-height:32px;font-size:25px;font-weight:400;font-style:normal;color:#44546f;letter-spacing:0.00px;white-space:pre;">29</div>
<div class="t" style="position:absolute;left:2960.3px;top:444.9px;line-height:32px;font-size:25px;font-weight:400;font-style:normal;color:#44546f;letter-spacing:0.00px;white-space:pre;">5</div>
<svg style="position:absolute;left:598px;top:567px;overflow:visible;" width="23" height="14" viewBox="0 0 23 14"><path d="M3 3 L11.5 11 L20 3" fill="none" stroke="#172b4d" stroke-width="4.5" stroke-linecap="round" stroke-linejoin="round"/></svg>
<svg style="position:absolute;left:662px;top:549px;overflow:visible;" width="48" height="48" viewBox="0 0 48 48"><circle cx="24" cy="24" r="24" fill="#6e5dc6"/><g fill="#fff"><circle cx="18.5" cy="16.5" r="4"/><path d="M11 27a5 5 0 0 1 5-5h5a5 5 0 0 1 5 5v5a1.5 1.5 0 0 1-1.5 1.5h-12A1.5 1.5 0 0 1 11 32z"/><circle cx="29" cy="21" r="4" stroke="#6e5dc6" stroke-width="1.5"/><path d="M21 31a5 5 0 0 1 5-5h6a5 5 0 0 1 5 5v4a2 2 0 0 1-2 2H23a2 2 0 0 1-2-2z" stroke="#6e5dc6" stroke-width="1.5"/></g></svg>
<div class="t" style="position:absolute;left:732.8px;top:555.5px;line-height:42px;font-size:32px;font-weight:400;font-style:normal;color:#172b4d;letter-spacing:-0.33px;white-space:pre;-webkit-text-stroke:0.55px #172b4d;">ADR Team</div>
<div style="position:absolute;left:2036px;top:547px;width:216px;height:60px;background:#e9f2ff;border-radius:6px;"></div>
<svg style="position:absolute;left:2045.6px;top:557px;overflow:visible;" width="10" height="40" viewBox="0 0 10 40"><rect width="10" height="40" rx="5" fill="#ffffff"/><rect y="9" width="10" height="31" rx="5" fill="#1f845a"/></svg>
<div class="t" style="position:absolute;left:2066.6px;top:562.2px;line-height:31px;font-size:24px;font-weight:700;font-style:normal;color:#0c66e4;letter-spacing:0.13px;white-space:pre;">ADR Sprint 1</div>
<div style="position:absolute;left:2276px;top:547px;width:232px;height:60px;background:#dcdfe4;border-radius:6px;"></div>
<svg style="position:absolute;left:2285.6px;top:557px;overflow:visible;" width="10" height="40" viewBox="0 0 10 40"><rect width="10" height="40" rx="5" fill="#ffffff"/><rect y="4" width="10" height="36" rx="5" fill="#1f845a"/></svg>
<div class="t" style="position:absolute;left:2307.0px;top:562.2px;line-height:31px;font-size:24px;font-weight:700;font-style:normal;color:#44546f;letter-spacing:0.13px;white-space:pre;">ADR Sprint 2</div>
<div style="position:absolute;left:2516px;top:547px;width:215.5px;height:60px;background:#dcdfe4;border-radius:6px;"></div>
<svg style="position:absolute;left:2526px;top:557px;overflow:visible;" width="10" height="40" viewBox="0 0 10 40"><rect width="10" height="40" rx="5" fill="#ffffff"/><rect y="10" width="10" height="30" rx="5" fill="#1f845a"/></svg>
<div class="t" style="position:absolute;left:2546.8px;top:562.2px;line-height:31px;font-size:24px;font-weight:700;font-style:normal;color:#44546f;letter-spacing:0.13px;white-space:pre;">ADR Sprint 3</div>
<div style="position:absolute;left:2740px;top:547px;width:216px;height:60px;background:#dcdfe4;border-radius:6px;"></div>
<svg style="position:absolute;left:2750px;top:557px;overflow:visible;" width="10" height="40" viewBox="0 0 10 40"><rect width="10" height="40" rx="5" fill="#ffffff"/><rect y="5" width="10" height="35" rx="5" fill="#1f845a"/></svg>
<div class="t" style="position:absolute;left:2771.0px;top:562.2px;line-height:31px;font-size:24px;font-weight:700;font-style:normal;color:#44546f;letter-spacing:0.13px;white-space:pre;">ADR Sprint 4</div>
<div style="position:absolute;left:2964px;top:547px;width:136px;height:60px;background:#dcdfe4;border-radius:6px;"></div>
<svg style="position:absolute;left:2974px;top:557px;overflow:visible;" width="10" height="40" viewBox="0 0 10 40"><rect width="10" height="40" rx="5" fill="#ffffff"/><rect y="0" width="10" height="40" rx="5" fill="#1f845a"/></svg>
<div class="t" style="position:absolute;left:2994.7px;top:562.2px;line-height:31px;font-size:24px;font-weight:700;font-style:normal;color:#44546f;letter-spacing:0.13px;white-space:pre;">ADR Sprint 5</div>
<div style="position:absolute;left:588px;top:643px;width:28px;height:28px;border:4px solid #dcdfe4;border-radius:6px;background:#fff"></div>
<div class="t" style="position:absolute;left:642.0px;top:639.9px;line-height:36px;font-size:28px;font-weight:400;font-style:normal;color:#626f86;letter-spacing:0.00px;white-space:pre;">1</div>
<svg style="position:absolute;left:689px;top:653px;overflow:visible;" width="17" height="11" viewBox="0 0 17 11"><path d="M2.5 2.5 L8.5 8.5 L14.5 2.5" fill="none" stroke="#000" stroke-width="4" stroke-linecap="round" stroke-linejoin="round"/></svg>
<svg style="position:absolute;left:722px;top:641px;overflow:visible;" width="32" height="32" viewBox="0 0 32 32"><rect width="32" height="32" rx="1" fill="#0a8fa6"/><path d="M6.5 9.5 V23 H14 M26.5 9.5 H18.5 V23 H26.5 M18.5 16.3 H25.5" fill="none" stroke="#fff" stroke-width="3.2"/></svg>
<div class="t" style="position:absolute;left:765.0px;top:639.9px;line-height:36px;font-size:28px;font-weight:400;font-style:normal;color:#0c66e4;letter-spacing:0.55px;white-space:pre;-webkit-text-stroke:0.25px #0c66e4;">IP-8</div>
<div class="t" style="position:absolute;left:842.0px;top:639.9px;line-height:36px;font-size:28px;font-weight:400;font-style:normal;color:#172b4d;letter-spacing:0.69px;white-space:pre;-webkit-text-stroke:0.55px #172b4d;">Team Travel Mobile Apps</div>
<div style="position:absolute;left:1292px;top:642px;width:170px;height:30px;background:#e9f2ff;border-radius:6px;"></div>
<div class="t" style="position:absolute;left:1300.8px;top:643.2px;line-height:29px;font-size:22px;font-weight:700;font-style:normal;color:#0055cc;letter-spacing:-0.08px;white-space:pre;">IN PROGRESS</div>
<svg style="position:absolute;left:1536px;top:644px;overflow:visible;" width="24" height="30" viewBox="0 0 24 30"><path d="M2 28 V14 a4 4 0 0 1 4 -4 H20 M12 2 L20.5 10 L12 18" fill="none" stroke="#44546f" stroke-width="3.8" stroke-linecap="round" stroke-linejoin="round"/></svg>
<svg style="position:absolute;left:1797px;top:644px;overflow:visible;" width="24" height="30" viewBox="0 0 24 30"><path d="M2 28 V14 a4 4 0 0 1 4 -4 H20 M12 2 L20.5 10 L12 18" fill="none" stroke="#44546f" stroke-width="3.8" stroke-linecap="round" stroke-linejoin="round"/></svg>
<div class="t" style="position:absolute;left:1611.8px;top:639.9px;line-height:36px;font-size:28px;font-weight:400;font-style:italic;color:#44546f;letter-spacing:1.30px;white-space:pre;">09/Apr/23</div>
<div class="t" style="position:absolute;left:1869.3px;top:639.9px;line-height:36px;font-size:28px;font-weight:400;font-style:italic;color:#44546f;letter-spacing:1.30px;white-space:pre;">25/Aug/23</div>
<div style="position:absolute;left:588px;top:723px;width:28px;height:28px;border:4px solid #dcdfe4;border-radius:6px;background:#fff"></div>
<svg style="position:absolute;left:738px;top:733px;overflow:visible;" width="17" height="11" viewBox="0 0 17 11"><path d="M2.5 2.5 L8.5 8.5 L14.5 2.5" fill="none" stroke="#000" stroke-width="4" stroke-linecap="round" stroke-linejoin="round"/></svg>
<svg style="position:absolute;left:772px;top:723px;overflow:visible;" width="28" height="28" viewBox="0 0 28 28"><rect width="28" height="28" rx="4" fill="#904ee2"/><path d="M15 6.5 L10 16.5 H14.5 L13.5 21.5 L18.5 11.5 H14 Z" fill="#fff" stroke="#fff" stroke-width="1.5" stroke-linejoin="round"/></svg>
<div class="t" style="position:absolute;left:813.0px;top:719.9px;line-height:36px;font-size:28px;font-weight:400;font-style:normal;color:#0c66e4;letter-spacing:0.10px;white-space:pre;-webkit-text-stroke:0.25px #0c66e4;">ADR-5</div>
<div class="t" style="position:absolute;left:920.7px;top:719.9px;line-height:36px;font-size:28px;font-weight:400;font-style:normal;color:#172b4d;letter-spacing:0.98px;white-space:pre;-webkit-text-stroke:0.55px #172b4d;">App Basics - Android test</div>
<div style="position:absolute;left:1292px;top:722px;width:170px;height:30px;background:#e9f2ff;border-radius:6px;"></div>
<div class="t" style="position:absolute;left:1300.8px;top:723.2px;line-height:29px;font-size:22px;font-weight:700;font-style:normal;color:#0055cc;letter-spacing:-0.08px;white-space:pre;">IN PROGRESS</div>
<svg style="position:absolute;left:1536px;top:724px;overflow:visible;" width="24" height="30" viewBox="0 0 24 30"><path d="M2 28 V14 a4 4 0 0 1 4 -4 H20 M12 2 L20.5 10 L12 18" fill="none" stroke="#44546f" stroke-width="3.8" stroke-linecap="round" stroke-linejoin="round"/></svg>
<svg style="position:absolute;left:1797px;top:724px;overflow:visible;" width="24" height="30" viewBox="0 0 24 30"><path d="M2 28 V14 a4 4 0 0 1 4 -4 H20 M12 2 L20.5 10 L12 18" fill="none" stroke="#44546f" stroke-width="3.8" stroke-linecap="round" stroke-linejoin="round"/></svg>
<div class="t" style="position:absolute;left:1611.8px;top:719.9px;line-height:36px;font-size:28px;font-weight:400;font-style:italic;color:#44546f;letter-spacing:1.30px;white-space:pre;">09/Apr/23</div>
<div class="t" style="position:absolute;left:1866.2px;top:719.9px;line-height:36px;font-size:28px;font-weight:400;font-style:italic;color:#44546f;letter-spacing:1.30px;white-space:pre;">22/May/23</div>
<div style="position:absolute;left:588px;top:803px;width:28px;height:28px;border:4px solid #dcdfe4;border-radius:6px;background:#fff"></div>
<svg style="position:absolute;left:790px;top:809px;overflow:visible;" width="11" height="17" viewBox="0 0 11 17"><path d="M2.5 2.5 L8.5 8.5 L2.5 14.5" fill="none" stroke="#000" stroke-width="4" stroke-linecap="round" stroke-linejoin="round"/></svg>
<svg style="position:absolute;left:820px;top:803px;overflow:visible;" width="28" height="28" viewBox="0 0 28 28"><rect width="28" height="28" rx="4" fill="#63ba3c"/><path d="M8.5 7.5 a1.5 1.5 0 0 1 1.5 -1.5 H18 a1.5 1.5 0 0 1 1.5 1.5 V21.5 L14 16.5 L8.5 21.5 Z" fill="#fff"/></svg>
<div class="t" style="position:absolute;left:861.0px;top:799.9px;line-height:36px;font-size:28px;font-weight:400;font-style:normal;color:#0c66e4;letter-spacing:0.56px;white-space:pre;-webkit-text-stroke:0.25px #0c66e4;">ADR-44</div>
<div class="t" style="position:absolute;left:987.6px;top:799.9px;line-height:36px;font-size:28px;font-weight:400;font-style:normal;color:#172b4d;letter-spacing:0.24px;white-space:pre;-webkit-text-stroke:0.55px #172b4d;">As a user I can up...</div>
<div style="position:absolute;left:1292px;top:802px;width:170px;height:30px;background:#e9f2ff;border-radius:6px;"></div>
<div class="t" style="position:absolute;left:1300.8px;top:803.2px;line-height:29px;font-size:22px;font-weight:700;font-style:normal;color:#0055cc;letter-spacing:-0.08px;white-space:pre;">IN PROGRESS</div>
<div style="position:absolute;left:1522px;top:803px;width:31px;height:32px;background:#f1f2f4;border-radius:6px;"></div>
<div class="t" style="position:absolute;left:1530.5px;top:805.2px;line-height:29px;font-size:22px;font-weight:700;font-style:italic;color:#44546f;letter-spacing:0.00px;white-space:pre;">S</div>
<div style="position:absolute;left:1784px;top:803px;width:31px;height:32px;background:#f1f2f4;border-radius:6px;"></div>
<div class="t" style="position:absolute;left:1792.5px;top:805.2px;line-height:29px;font-size:22px;font-weight:700;font-style:italic;color:#44546f;letter-spacing:0.00px;white-space:pre;">S</div>
<div class="t" style="position:absolute;left:1611.8px;top:799.9px;line-height:36px;font-size:28px;font-weight:400;font-style:italic;color:#44546f;letter-spacing:1.30px;white-space:pre;">09/Apr/23</div>
<div class="t" style="position:absolute;left:1875.6px;top:799.9px;line-height:36px;font-size:28px;font-weight:400;font-style:italic;color:#44546f;letter-spacing:1.30px;white-space:pre;">22/Apr/23</div>
<div style="position:absolute;left:588px;top:883px;width:28px;height:28px;border:4px solid #dcdfe4;border-radius:6px;background:#fff"></div>
<svg style="position:absolute;left:820px;top:883px;overflow:visible;" width="28" height="28" viewBox="0 0 28 28"><rect width="28" height="28" rx="4" fill="#63ba3c"/><path d="M8.5 7.5 a1.5 1.5 0 0 1 1.5 -1.5 H18 a1.5 1.5 0 0 1 1.5 1.5 V21.5 L14 16.5 L8.5 21.5 Z" fill="#fff"/></svg>
<div class="t" style="position:absolute;left:861.0px;top:879.9px;line-height:36px;font-size:28px;font-weight:400;font-style:normal;color:#0c66e4;letter-spacing:-0.72px;white-space:pre;-webkit-text-stroke:0.25px #0c66e4;">ADR-12</div>
<div class="t" style="position:absolute;left:981.8px;top:879.9px;line-height:36px;font-size:28px;font-weight:400;font-style:normal;color:#172b4d;letter-spacing:0.44px;white-space:pre;-webkit-text-stroke:0.55px #172b4d;">Setup dev and and ...</div>
<div style="position:absolute;left:1292px;top:882px;width:170px;height:30px;background:#e9f2ff;border-radius:6px;"></div>
<div class="t" style="position:absolute;left:1300.8px;top:883.2px;line-height:29px;font-size:22px;font-weight:700;font-style:normal;color:#0055cc;letter-spacing:-0.08px;white-space:pre;">IN PROGRESS</div>
<div style="position:absolute;left:1522px;top:883px;width:31px;height:32px;background:#f1f2f4;border-radius:6px;"></div>
<div class="t" style="position:absolute;left:1530.5px;top:885.2px;line-height:29px;font-size:22px;font-weight:700;font-style:italic;color:#44546f;letter-spacing:0.00px;white-space:pre;">S</div>
<div style="position:absolute;left:1784px;top:883px;width:31px;height:32px;background:#f1f2f4;border-radius:6px;"></div>
<div class="t" style="position:absolute;left:1792.5px;top:885.2px;line-height:29px;font-size:22px;font-weight:700;font-style:italic;color:#44546f;letter-spacing:0.00px;white-space:pre;">S</div>
<div class="t" style="position:absolute;left:1611.8px;top:879.9px;line-height:36px;font-size:28px;font-weight:400;font-style:italic;color:#44546f;letter-spacing:1.30px;white-space:pre;">09/Apr/23</div>
<div class="t" style="position:absolute;left:1875.6px;top:879.9px;line-height:36px;font-size:28px;font-weight:400;font-style:italic;color:#44546f;letter-spacing:1.30px;white-space:pre;">22/Apr/23</div>
<div style="position:absolute;left:588px;top:963px;width:28px;height:28px;border:4px solid #dcdfe4;border-radius:6px;background:#fff"></div>
<svg style="position:absolute;left:820px;top:963px;overflow:visible;" width="28" height="28" viewBox="0 0 28 28"><rect width="28" height="28" rx="4" fill="#63ba3c"/><path d="M8.5 7.5 a1.5 1.5 0 0 1 1.5 -1.5 H18 a1.5 1.5 0 0 1 1.5 1.5 V21.5 L14 16.5 L8.5 21.5 Z" fill="#fff"/></svg>
<div class="t" style="position:absolute;left:861.0px;top:959.9px;line-height:36px;font-size:28px;font-weight:400;font-style:normal;color:#0c66e4;letter-spacing:0.48px;white-space:pre;-webkit-text-stroke:0.25px #0c66e4;">ADR-45</div>
<div class="t" style="position:absolute;left:987.0px;top:959.9px;line-height:36px;font-size:28px;font-weight:400;font-style:normal;color:#172b4d;letter-spacing:0.16px;white-space:pre;-webkit-text-stroke:0.55px #172b4d;">As a user I can ena...</div>
<div style="position:absolute;left:1292px;top:962px;width:81px;height:30px;background:#dcfff1;border-radius:6px;"></div>
<div class="t" style="position:absolute;left:1300.8px;top:963.2px;line-height:29px;font-size:22px;font-weight:700;font-style:normal;color:#216e4e;letter-spacing:-0.62px;white-space:pre;">DONE</div>
<div style="position:absolute;left:1522px;top:963px;width:31px;height:32px;background:#f1f2f4;border-radius:6px;"></div>
<div class="t" style="position:absolute;left:1530.5px;top:965.2px;line-height:29px;font-size:22px;font-weight:700;font-style:italic;color:#44546f;letter-spacing:0.00px;white-space:pre;">S</div>
<div style="position:absolute;left:1784px;top:963px;width:31px;height:32px;background:#f1f2f4;border-radius:6px;"></div>
<div class="t" style="position:absolute;left:1792.5px;top:965.2px;line-height:29px;font-size:22px;font-weight:700;font-style:italic;color:#44546f;letter-spacing:0.00px;white-space:pre;">S</div>
<div class="t" style="position:absolute;left:1611.8px;top:959.9px;line-height:36px;font-size:28px;font-weight:400;font-style:italic;color:#44546f;letter-spacing:1.30px;white-space:pre;">09/Apr/23</div>
<div class="t" style="position:absolute;left:1875.6px;top:959.9px;line-height:36px;font-size:28px;font-weight:400;font-style:italic;color:#44546f;letter-spacing:1.30px;white-space:pre;">22/Apr/23</div>
<div style="position:absolute;left:588px;top:1043px;width:28px;height:28px;border:4px solid #dcdfe4;border-radius:6px;background:#fff"></div>
<svg style="position:absolute;left:820px;top:1043px;overflow:visible;" width="28" height="28" viewBox="0 0 28 28"><rect width="28" height="28" rx="4" fill="#63ba3c"/><path d="M8.5 7.5 a1.5 1.5 0 0 1 1.5 -1.5 H18 a1.5 1.5 0 0 1 1.5 1.5 V21.5 L14 16.5 L8.5 21.5 Z" fill="#fff"/></svg>
<div class="t" style="position:absolute;left:861.0px;top:1039.9px;line-height:36px;font-size:28px;font-weight:400;font-style:normal;color:#0c66e4;letter-spacing:-0.52px;white-space:pre;-webkit-text-stroke:0.25px #0c66e4;">ADR-14</div>
<div class="t" style="position:absolute;left:982.6px;top:1039.9px;line-height:36px;font-size:28px;font-weight:400;font-style:normal;color:#172b4d;letter-spacing:0.27px;white-space:pre;-webkit-text-stroke:0.55px #172b4d;">As a user I can cre...</div>
<div style="position:absolute;left:1292px;top:1042px;width:87px;height:30px;background:#f1f2f4;border-radius:6px;"></div>
<div class="t" style="position:absolute;left:1300.8px;top:1043.2px;line-height:29px;font-size:22px;font-weight:700;font-style:normal;color:#172b4d;letter-spacing:-0.07px;white-space:pre;">TO DO</div>
<div style="position:absolute;left:1522px;top:1043px;width:31px;height:32px;background:#f1f2f4;border-radius:6px;"></div>
<div class="t" style="position:absolute;left:1530.5px;top:1045.2px;line-height:29px;font-size:22px;font-weight:700;font-style:italic;color:#44546f;letter-spacing:0.00px;white-space:pre;">S</div>
<div style="position:absolute;left:1784px;top:1043px;width:31px;height:32px;background:#f1f2f4;border-radius:6px;"></div>
<div class="t" style="position:absolute;left:1792.5px;top:1045.2px;line-height:29px;font-size:22px;font-weight:700;font-style:italic;color:#44546f;letter-spacing:0.00px;white-space:pre;">S</div>
<div class="t" style="position:absolute;left:1611.8px;top:1039.9px;line-height:36px;font-size:28px;font-weight:400;font-style:italic;color:#44546f;letter-spacing:1.30px;white-space:pre;">24/Apr/23</div>
<div class="t" style="position:absolute;left:1866.2px;top:1039.9px;line-height:36px;font-size:28px;font-weight:400;font-style:italic;color:#44546f;letter-spacing:1.30px;white-space:pre;">08/May/23</div>
<div style="position:absolute;left:588px;top:1123px;width:28px;height:28px;border:4px solid #dcdfe4;border-radius:6px;background:#fff"></div>
<svg style="position:absolute;left:790px;top:1129px;overflow:visible;" width="11" height="17" viewBox="0 0 11 17"><path d="M2.5 2.5 L8.5 8.5 L2.5 14.5" fill="none" stroke="#000" stroke-width="4" stroke-linecap="round" stroke-linejoin="round"/></svg>
<svg style="position:absolute;left:820px;top:1123px;overflow:visible;" width="28" height="28" viewBox="0 0 28 28"><rect width="28" height="28" rx="4" fill="#63ba3c"/><path d="M8.5 7.5 a1.5 1.5 0 0 1 1.5 -1.5 H18 a1.5 1.5 0 0 1 1.5 1.5 V21.5 L14 16.5 L8.5 21.5 Z" fill="#fff"/></svg>
<div class="t" style="position:absolute;left:861.0px;top:1119.9px;line-height:36px;font-size:28px;font-weight:400;font-style:normal;color:#0c66e4;letter-spacing:-0.52px;white-space:pre;-webkit-text-stroke:0.25px #0c66e4;">ADR-13</div>
<div class="t" style="position:absolute;left:981.8px;top:1119.9px;line-height:36px;font-size:28px;font-weight:400;font-style:normal;color:#172b4d;letter-spacing:0.30px;white-space:pre;-webkit-text-stroke:0.55px #172b4d;">As a user I can log i...</div>
<div style="position:absolute;left:1292px;top:1122px;width:87px;height:30px;background:#f1f2f4;border-radius:6px;"></div>
<div class="t" style="position:absolute;left:1300.8px;top:1123.2px;line-height:29px;font-size:22px;font-weight:700;font-style:normal;color:#172b4d;letter-spacing:-0.07px;white-space:pre;">TO DO</div>
<div style="position:absolute;left:1522px;top:1123px;width:31px;height:32px;background:#f1f2f4;border-radius:6px;"></div>
<div class="t" style="position:absolute;left:1530.5px;top:1125.2px;line-height:29px;font-size:22px;font-weight:700;font-style:italic;color:#44546f;letter-spacing:0.00px;white-space:pre;">S</div>
<div style="position:absolute;left:1784px;top:1123px;width:31px;height:32px;background:#f1f2f4;border-radius:6px;"></div>
<div class="t" style="position:absolute;left:1792.5px;top:1125.2px;line-height:29px;font-size:22px;font-weight:700;font-style:italic;color:#44546f;letter-spacing:0.00px;white-space:pre;">S</div>
<div class="t" style="position:absolute;left:1611.8px;top:1119.9px;line-height:36px;font-size:28px;font-weight:400;font-style:italic;color:#44546f;letter-spacing:1.30px;white-space:pre;">24/Apr/23</div>
<div class="t" style="position:absolute;left:1866.2px;top:1119.9px;line-height:36px;font-size:28px;font-weight:400;font-style:italic;color:#44546f;letter-spacing:1.30px;white-space:pre;">08/May/23</div>
<div style="position:absolute;left:588px;top:1203px;width:28px;height:28px;border:4px solid #dcdfe4;border-radius:6px;background:#fff"></div>
<svg style="position:absolute;left:820px;top:1203px;overflow:visible;" width="28" height="28" viewBox="0 0 28 28"><rect width="28" height="28" rx="4" fill="#63ba3c"/><path d="M8.5 7.5 a1.5 1.5 0 0 1 1.5 -1.5 H18 a1.5 1.5 0 0 1 1.5 1.5 V21.5 L14 16.5 L8.5 21.5 Z" fill="#fff"/></svg>
<div class="t" style="position:absolute;left:861.0px;top:1199.9px;line-height:36px;font-size:28px;font-weight:400;font-style:normal;color:#0c66e4;letter-spacing:-0.90px;white-space:pre;-webkit-text-stroke:0.25px #0c66e4;">ADR-11</div>
<div class="t" style="position:absolute;left:978.0px;top:1199.9px;line-height:36px;font-size:28px;font-weight:400;font-style:normal;color:#172b4d;letter-spacing:0.28px;white-space:pre;-webkit-text-stroke:0.55px #172b4d;">As a user I can log i...</div>
<div style="position:absolute;left:1292px;top:1202px;width:87px;height:30px;background:#f1f2f4;border-radius:6px;"></div>
<div class="t" style="position:absolute;left:1300.8px;top:1203.2px;line-height:29px;font-size:22px;font-weight:700;font-style:normal;color:#172b4d;letter-spacing:-0.07px;white-space:pre;">TO DO</div>
<div style="position:absolute;left:1522px;top:1203px;width:31px;height:32px;background:#f1f2f4;border-radius:6px;"></div>
<div class="t" style="position:absolute;left:1530.5px;top:1205.2px;line-height:29px;font-size:22px;font-weight:700;font-style:italic;color:#44546f;letter-spacing:0.00px;white-space:pre;">S</div>
<div style="position:absolute;left:1784px;top:1203px;width:31px;height:32px;background:#f1f2f4;border-radius:6px;"></div>
<div class="t" style="position:absolute;left:1792.5px;top:1205.2px;line-height:29px;font-size:22px;font-weight:700;font-style:italic;color:#44546f;letter-spacing:0.00px;white-space:pre;">S</div>
<div class="t" style="position:absolute;left:1602.4px;top:1199.9px;line-height:36px;font-size:28px;font-weight:400;font-style:italic;color:#44546f;letter-spacing:1.30px;white-space:pre;">09/May/23</div>
<div class="t" style="position:absolute;left:1866.2px;top:1199.9px;line-height:36px;font-size:28px;font-weight:400;font-style:italic;color:#44546f;letter-spacing:1.30px;white-space:pre;">22/May/23</div>
<div style="position:absolute;left:588px;top:1283px;width:28px;height:28px;border:4px solid #dcdfe4;border-radius:6px;background:#fff"></div>
<svg style="position:absolute;left:740px;top:1289px;overflow:visible;" width="11" height="17" viewBox="0 0 11 17"><path d="M2.5 2.5 L8.5 8.5 L2.5 14.5" fill="none" stroke="#000" stroke-width="4" stroke-linecap="round" stroke-linejoin="round"/></svg>
<svg style="position:absolute;left:772px;top:1283px;overflow:visible;" width="28" height="28" viewBox="0 0 28 28"><rect width="28" height="28" rx="4" fill="#904ee2"/><path d="M15 6.5 L10 16.5 H14.5 L13.5 21.5 L18.5 11.5 H14 Z" fill="#fff" stroke="#fff" stroke-width="1.5" stroke-linejoin="round"/></svg>
<div class="t" style="position:absolute;left:812.7px;top:1279.9px;line-height:36px;font-size:28px;font-weight:400;font-style:normal;color:#0c66e4;letter-spacing:0.22px;white-space:pre;-webkit-text-stroke:0.25px #0c66e4;">ADR-6</div>
<div class="t" style="position:absolute;left:921.7px;top:1279.9px;line-height:36px;font-size:28px;font-weight:400;font-style:normal;color:#172b4d;letter-spacing:0.64px;white-space:pre;-webkit-text-stroke:0.55px #172b4d;">Invite and share</div>
<div style="position:absolute;left:1292px;top:1282px;width:170px;height:30px;background:#e9f2ff;border-radius:6px;"></div>
<div class="t" style="position:absolute;left:1300.8px;top:1283.2px;line-height:29px;font-size:22px;font-weight:700;font-style:normal;color:#0055cc;letter-spacing:-0.08px;white-space:pre;">IN PROGRESS</div>
<svg style="position:absolute;left:1536px;top:1284px;overflow:visible;" width="24" height="30" viewBox="0 0 24 30"><path d="M2 28 V14 a4 4 0 0 1 4 -4 H20 M12 2 L20.5 10 L12 18" fill="none" stroke="#44546f" stroke-width="3.8" stroke-linecap="round" stroke-linejoin="round"/></svg>
<svg style="position:absolute;left:1797px;top:1284px;overflow:visible;" width="24" height="30" viewBox="0 0 24 30"><path d="M2 28 V14 a4 4 0 0 1 4 -4 H20 M12 2 L20.5 10 L12 18" fill="none" stroke="#44546f" stroke-width="3.8" stroke-linecap="round" stroke-linejoin="round"/></svg>
<div class="t" style="position:absolute;left:1610.2px;top:1279.9px;line-height:36px;font-size:28px;font-weight:400;font-style:italic;color:#44546f;letter-spacing:1.30px;white-space:pre;">06/Jun/23</div>
<div class="t" style="position:absolute;left:1883.4px;top:1279.9px;line-height:36px;font-size:28px;font-weight:400;font-style:italic;color:#44546f;letter-spacing:1.30px;white-space:pre;">03/Jul/23</div>
<div style="position:absolute;left:588px;top:1363px;width:28px;height:28px;border:4px solid #dcdfe4;border-radius:6px;background:#fff"></div>
<svg style="position:absolute;left:740px;top:1369px;overflow:visible;" width="11" height="17" viewBox="0 0 11 17"><path d="M2.5 2.5 L8.5 8.5 L2.5 14.5" fill="none" stroke="#000" stroke-width="4" stroke-linecap="round" stroke-linejoin="round"/></svg>
<svg style="position:absolute;left:772px;top:1363px;overflow:visible;" width="28" height="28" viewBox="0 0 28 28"><rect width="28" height="28" rx="4" fill="#904ee2"/><path d="M15 6.5 L10 16.5 H14.5 L13.5 21.5 L18.5 11.5 H14 Z" fill="#fff" stroke="#fff" stroke-width="1.5" stroke-linejoin="round"/></svg>
<div class="t" style="position:absolute;left:812.7px;top:1359.9px;line-height:36px;font-size:28px;font-weight:400;font-style:normal;color:#0c66e4;letter-spacing:-0.18px;white-space:pre;-webkit-text-stroke:0.25px #0c66e4;">ADR-7</div>
<div class="t" style="position:absolute;left:920.0px;top:1359.9px;line-height:36px;font-size:28px;font-weight:400;font-style:normal;color:#172b4d;letter-spacing:0.69px;white-space:pre;-webkit-text-stroke:0.55px #172b4d;">My Group Trips Overview</div>
<div style="position:absolute;left:1292px;top:1362px;width:87px;height:30px;background:#f1f2f4;border-radius:6px;"></div>
<div class="t" style="position:absolute;left:1300.8px;top:1363.2px;line-height:29px;font-size:22px;font-weight:700;font-style:normal;color:#172b4d;letter-spacing:-0.07px;white-space:pre;">TO DO</div>
<div class="t" style="position:absolute;left:1522.5px;top:1359.9px;line-height:36px;font-size:28px;font-weight:400;font-style:normal;color:#172b4d;letter-spacing:0.42px;white-space:pre;">07/Jul/23</div>
<div class="t" style="position:absolute;left:1784.5px;top:1359.9px;line-height:36px;font-size:28px;font-weight:400;font-style:normal;color:#172b4d;letter-spacing:0.29px;white-space:pre;">25/Aug/23</div>
<svg style="position:absolute;left:1720px;top:1365px;overflow:visible;" width="24" height="24" viewBox="0 0 24 24"><circle cx="12" cy="12" r="12" fill="#626f86"/><path d="M7.5 7.5 L16.5 16.5 M16.5 7.5 L7.5 16.5" stroke="#fff" stroke-width="3" stroke-linecap="round"/></svg>
<svg style="position:absolute;left:1984px;top:1365px;overflow:visible;" width="24" height="24" viewBox="0 0 24 24"><circle cx="12" cy="12" r="12" fill="#626f86"/><path d="M7.5 7.5 L16.5 16.5 M16.5 7.5 L7.5 16.5" stroke="#fff" stroke-width="3" stroke-linecap="round"/></svg>
<div style="position:absolute;left:588px;top:1443px;width:28px;height:28px;border:4px solid #dcdfe4;border-radius:6px;background:#fff"></div>
<div class="t" style="position:absolute;left:642.0px;top:1439.9px;line-height:36px;font-size:28px;font-weight:400;font-style:normal;color:#626f86;letter-spacing:0.00px;white-space:pre;">2</div>
<svg style="position:absolute;left:692px;top:1449px;overflow:visible;" width="11" height="17" viewBox="0 0 11 17"><path d="M2.5 2.5 L8.5 8.5 L2.5 14.5" fill="none" stroke="#000" stroke-width="4" stroke-linecap="round" stroke-linejoin="round"/></svg>
<svg style="position:absolute;left:722px;top:1441px;overflow:visible;" width="32" height="32" viewBox="0 0 32 32"><rect width="32" height="32" rx="1" fill="#0a8fa6"/><path d="M6.5 9.5 V23 H14 M26.5 9.5 H18.5 V23 H26.5 M18.5 16.3 H25.5" fill="none" stroke="#fff" stroke-width="3.2"/></svg>
<div class="t" style="position:absolute;left:764.8px;top:1439.9px;line-height:36px;font-size:28px;font-weight:400;font-style:normal;color:#0c66e4;letter-spacing:0.18px;white-space:pre;-webkit-text-stroke:0.25px #0c66e4;">IP-7</div>
<div class="t" style="position:absolute;left:840.0px;top:1439.9px;line-height:36px;font-size:28px;font-weight:400;font-style:normal;color:#172b4d;letter-spacing:0.85px;white-space:pre;-webkit-text-stroke:0.55px #172b4d;">New payment systems</div>
<div style="position:absolute;left:1292px;top:1442px;width:170px;height:30px;background:#e9f2ff;border-radius:6px;"></div>
<div class="t" style="position:absolute;left:1300.8px;top:1443.2px;line-height:29px;font-size:22px;font-weight:700;font-style:normal;color:#0055cc;letter-spacing:-0.08px;white-space:pre;">IN PROGRESS</div>
<svg style="position:absolute;left:1536px;top:1444px;overflow:visible;" width="24" height="30" viewBox="0 0 24 30"><path d="M2 28 V14 a4 4 0 0 1 4 -4 H20 M12 2 L20.5 10 L12 18" fill="none" stroke="#44546f" stroke-width="3.8" stroke-linecap="round" stroke-linejoin="round"/></svg>
<svg style="position:absolute;left:1797px;top:1444px;overflow:visible;" width="24" height="30" viewBox="0 0 24 30"><path d="M2 28 V14 a4 4 0 0 1 4 -4 H20 M12 2 L20.5 10 L12 18" fill="none" stroke="#44546f" stroke-width="3.8" stroke-linecap="round" stroke-linejoin="round"/></svg>
<div class="t" style="position:absolute;left:1611.8px;top:1439.9px;line-height:36px;font-size:28px;font-weight:400;font-style:italic;color:#44546f;letter-spacing:1.30px;white-space:pre;">09/Apr/23</div>
<div class="t" style="position:absolute;left:1883.4px;top:1439.9px;line-height:36px;font-size:28px;font-weight:400;font-style:italic;color:#44546f;letter-spacing:1.30px;white-space:pre;">14/Jul/23</div>
<div style="position:absolute;left:588px;top:1523px;width:28px;height:28px;border:4px solid #dcdfe4;border-radius:6px;background:#fff"></div>
<div class="t" style="position:absolute;left:642.0px;top:1519.9px;line-height:36px;font-size:28px;font-weight:400;font-style:normal;color:#626f86;letter-spacing:0.00px;white-space:pre;">3</div>
<svg style="position:absolute;left:692px;top:1529px;overflow:visible;" width="11" height="17" viewBox="0 0 11 17"><path d="M2.5 2.5 L8.5 8.5 L2.5 14.5" fill="none" stroke="#000" stroke-width="4" stroke-linecap="round" stroke-linejoin="round"/></svg>
<svg style="position:absolute;left:722px;top:1521px;overflow:visible;" width="32" height="32" viewBox="0 0 32 32"><rect width="32" height="32" rx="1" fill="#0a8fa6"/><path d="M6.5 9.5 V23 H14 M26.5 9.5 H18.5 V23 H26.5 M18.5 16.3 H25.5" fill="none" stroke="#fff" stroke-width="3.2"/></svg>
<div class="t" style="position:absolute;left:764.8px;top:1519.9px;line-height:36px;font-size:28px;font-weight:400;font-style:normal;color:#0c66e4;letter-spacing:0.51px;white-space:pre;-webkit-text-stroke:0.25px #0c66e4;">IP-5</div>
<div class="t" style="position:absolute;left:841.5px;top:1519.9px;line-height:36px;font-size:28px;font-weight:400;font-style:normal;color:#172b4d;letter-spacing:0.93px;white-space:pre;-webkit-text-stroke:0.55px #172b4d;">Intelligent travel suggestions</div>
<div style="position:absolute;left:1292px;top:1522px;width:126px;height:30px;background:#f1f2f4;border-radius:6px;"></div>
<div class="t" style="position:absolute;left:1300.8px;top:1523.2px;line-height:29px;font-size:22px;font-weight:700;font-style:normal;color:#172b4d;letter-spacing:-0.54px;white-space:pre;">BACKLOG</div>
<svg style="position:absolute;left:1536px;top:1524px;overflow:visible;" width="24" height="30" viewBox="0 0 24 30"><path d="M2 28 V14 a4 4 0 0 1 4 -4 H20 M12 2 L20.5 10 L12 18" fill="none" stroke="#44546f" stroke-width="3.8" stroke-linecap="round" stroke-linejoin="round"/></svg>
<svg style="position:absolute;left:1797px;top:1524px;overflow:visible;" width="24" height="30" viewBox="0 0 24 30"><path d="M2 28 V14 a4 4 0 0 1 4 -4 H20 M12 2 L20.5 10 L12 18" fill="none" stroke="#44546f" stroke-width="3.8" stroke-linecap="round" stroke-linejoin="round"/></svg>
<div class="t" style="position:absolute;left:1610.2px;top:1519.9px;line-height:36px;font-size:28px;font-weight:400;font-style:italic;color:#44546f;letter-spacing:1.30px;white-space:pre;">20/Jun/23</div>
<div class="t" style="position:absolute;left:1883.4px;top:1519.9px;line-height:36px;font-size:28px;font-weight:400;font-style:italic;color:#44546f;letter-spacing:1.30px;white-space:pre;">03/Jul/23</div>
<div style="position:absolute;left:588px;top:1603px;width:28px;height:28px;border:4px solid #dcdfe4;border-radius:6px;background:#fff"></div>
<div class="t" style="position:absolute;left:642.0px;top:1599.9px;line-height:36px;font-size:28px;font-weight:400;font-style:normal;color:#626f86;letter-spacing:0.00px;white-space:pre;">4</div>
<svg style="position:absolute;left:692px;top:1609px;overflow:visible;" width="11" height="17" viewBox="0 0 11 17"><path d="M2.5 2.5 L8.5 8.5 L2.5 14.5" fill="none" stroke="#000" stroke-width="4" stroke-linecap="round" stroke-linejoin="round"/></svg>
<svg style="position:absolute;left:722px;top:1601px;overflow:visible;" width="32" height="32" viewBox="0 0 32 32"><rect width="32" height="32" rx="1" fill="#0a8fa6"/><path d="M6.5 9.5 V23 H14 M26.5 9.5 H18.5 V23 H26.5 M18.5 16.3 H25.5" fill="none" stroke="#fff" stroke-width="3.2"/></svg>
<div class="t" style="position:absolute;left:764.8px;top:1599.9px;line-height:36px;font-size:28px;font-weight:400;font-style:normal;color:#0c66e4;letter-spacing:0.51px;white-space:pre;-webkit-text-stroke:0.25px #0c66e4;">IP-3</div>
<div class="t" style="position:absolute;left:841.5px;top:1599.9px;line-height:36px;font-size:28px;font-weight:400;font-style:normal;color:#172b4d;letter-spacing:1.12px;white-space:pre;-webkit-text-stroke:0.55px #172b4d;">Multi-destination search</div>
<div style="position:absolute;left:1292px;top:1602px;width:126px;height:30px;background:#dcdfe4;border-radius:6px;"></div>
<div class="t" style="position:absolute;left:1300.8px;top:1603.2px;line-height:29px;font-size:22px;font-weight:700;font-style:normal;color:#172b4d;letter-spacing:-0.54px;white-space:pre;">BACKLOG</div>
<svg style="position:absolute;left:1536px;top:1604px;overflow:visible;" width="24" height="30" viewBox="0 0 24 30"><path d="M2 28 V14 a4 4 0 0 1 4 -4 H20 M12 2 L20.5 10 L12 18" fill="none" stroke="#44546f" stroke-width="3.8" stroke-linecap="round" stroke-linejoin="round"/></svg>
<svg style="position:absolute;left:1797px;top:1604px;overflow:visible;" width="24" height="30" viewBox="0 0 24 30"><path d="M2 28 V14 a4 4 0 0 1 4 -4 H20 M12 2 L20.5 10 L12 18" fill="none" stroke="#44546f" stroke-width="3.8" stroke-linecap="round" stroke-linejoin="round"/></svg>
<div class="t" style="position:absolute;left:1610.2px;top:1599.9px;line-height:36px;font-size:28px;font-weight:400;font-style:italic;color:#44546f;letter-spacing:1.30px;white-space:pre;">06/Jun/23</div>
<div class="t" style="position:absolute;left:1869.3px;top:1599.9px;line-height:36px;font-size:28px;font-weight:400;font-style:italic;color:#44546f;letter-spacing:1.30px;white-space:pre;">14/Aug/23</div>
<div style="position:absolute;left:588px;top:1683px;width:28px;height:28px;border:4px solid #dcdfe4;border-radius:6px;background:#fff"></div>
<div class="t" style="position:absolute;left:642.0px;top:1679.9px;line-height:36px;font-size:28px;font-weight:400;font-style:normal;color:#626f86;letter-spacing:0.00px;white-space:pre;">5</div>
<svg style="position:absolute;left:692px;top:1689px;overflow:visible;" width="11" height="17" viewBox="0 0 11 17"><path d="M2.5 2.5 L8.5 8.5 L2.5 14.5" fill="none" stroke="#000" stroke-width="4" stroke-linecap="round" stroke-linejoin="round"/></svg>
<svg style="position:absolute;left:722px;top:1681px;overflow:visible;" width="32" height="32" viewBox="0 0 32 32"><rect width="32" height="32" rx="1" fill="#0a8fa6"/><path d="M6.5 9.5 V23 H14 M26.5 9.5 H18.5 V23 H26.5 M18.5 16.3 H25.5" fill="none" stroke="#fff" stroke-width="3.2"/></svg>
<div class="t" style="position:absolute;left:764.8px;top:1679.9px;line-height:36px;font-size:28px;font-weight:400;font-style:normal;color:#0c66e4;letter-spacing:0.51px;white-space:pre;-webkit-text-stroke:0.25px #0c66e4;">IP-6</div>
<div class="t" style="position:absolute;left:841.5px;top:1679.9px;line-height:36px;font-size:28px;font-weight:400;font-style:normal;color:#172b4d;letter-spacing:0.97px;white-space:pre;-webkit-text-stroke:0.55px #172b4d;">Performance level-up</div>
<div style="position:absolute;left:1292px;top:1682px;width:126px;height:30px;background:#f1f2f4;border-radius:6px;"></div>
<div class="t" style="position:absolute;left:1300.8px;top:1683.2px;line-height:29px;font-size:22px;font-weight:700;font-style:normal;color:#172b4d;letter-spacing:-0.54px;white-space:pre;">BACKLOG</div>
<svg style="position:absolute;left:1536px;top:1684px;overflow:visible;" width="24" height="30" viewBox="0 0 24 30"><path d="M2 28 V14 a4 4 0 0 1 4 -4 H20 M12 2 L20.5 10 L12 18" fill="none" stroke="#44546f" stroke-width="3.8" stroke-linecap="round" stroke-linejoin="round"/></svg>
<svg style="position:absolute;left:1797px;top:1684px;overflow:visible;" width="24" height="30" viewBox="0 0 24 30"><path d="M2 28 V14 a4 4 0 0 1 4 -4 H20 M12 2 L20.5 10 L12 18" fill="none" stroke="#44546f" stroke-width="3.8" stroke-linecap="round" stroke-linejoin="round"/></svg>
<div class="t" style="position:absolute;left:1605.5px;top:1679.9px;line-height:36px;font-size:28px;font-weight:400;font-style:italic;color:#44546f;letter-spacing:1.30px;white-space:pre;">27/Aug/23</div>
<div class="t" style="position:absolute;left:1875.6px;top:1679.9px;line-height:36px;font-size:28px;font-weight:400;font-style:italic;color:#44546f;letter-spacing:1.30px;white-space:pre;">07/Oct/23</div>
<div style="position:absolute;left:2032px;top:633px;width:1008px;height:48px;background:repeating-linear-gradient(120deg,#0747a6 0px,#0747a6 30.1px,#09326c 30.1px,#09326c 60.2px);border-radius:8px 0 0 8px;"></div>
<svg style="position:absolute;left:2956px;top:649.5px;overflow:visible;" width="20" height="16" viewBox="0 0 20 16"><path d="M2 8 H17 M11 2 L17 8 L11 14" fill="none" stroke="#fff" stroke-width="3.8" stroke-linecap="round" stroke-linejoin="round"/></svg>
<div style="position:absolute;left:2032px;top:713px;width:704px;height:48px;background:repeating-linear-gradient(120deg,#0747a6 0px,#0747a6 30.1px,#09326c 30.1px,#09326c 60.2px);border-radius:8px;"></div>
<div style="position:absolute;left:2032px;top:793px;width:224px;height:48px;background:#0747a6;border-radius:8px;"></div>
<div style="position:absolute;left:2032px;top:873px;width:224px;height:48px;background:#0747a6;border-radius:8px;"></div>
<div style="position:absolute;left:2032px;top:953px;width:224px;height:48px;background:#006644;border-radius:8px;"></div>
<svg style="position:absolute;left:2223px;top:968px;overflow:visible;" width="19" height="19" viewBox="0 0 19 19"><g fill="none" stroke="#fff" stroke-width="2.6" transform="rotate(-45 9.5 9.5)"><rect x="-1" y="5.5" width="11" height="8" rx="4"/><rect x="9" y="5.5" width="11" height="8" rx="4"/></g></svg>
<div style="position:absolute;left:2272px;top:1033px;width:240px;height:48px;background:#44546f;border-radius:8px;"></div>
<div style="position:absolute;left:2272px;top:1113px;width:240px;height:48px;background:#44546f;border-radius:8px;"></div>
<div style="position:absolute;left:2512px;top:1193px;width:224px;height:48px;background:#44546f;border-radius:8px;"></div>
<svg style="position:absolute;left:2703px;top:1208px;overflow:visible;" width="19" height="19" viewBox="0 0 19 19"><g fill="none" stroke="#fff" stroke-width="2.6" transform="rotate(-45 9.5 9.5)"><rect x="-1" y="5.5" width="11" height="8" rx="4"/><rect x="9" y="5.5" width="11" height="8" rx="4"/></g></svg>
<svg style="position:absolute;left:0px;top:0px;overflow:visible;pointer-events:none;" width="3024" height="1731" viewBox="0 0 3024 1731"><g fill="none" stroke="#758195" stroke-width="3.4"><path d="M2256 897 C2362 897 2406 1217 2512 1217"/><path d="M2512 1137 C2592 1137 2432 1217 2512 1217"/></g></svg>
<div style="position:absolute;left:2272px;top:1033px;width:240px;height:48px;background:#44546f;border-radius:8px;"></div>
<div style="position:absolute;left:2272px;top:1113px;width:240px;height:48px;background:#44546f;border-radius:8px;"></div>
<div style="position:absolute;left:2512px;top:1193px;width:224px;height:48px;background:#44546f;border-radius:8px;"></div>
<svg style="position:absolute;left:2703px;top:1208px;overflow:visible;" width="19" height="19" viewBox="0 0 19 19"><g fill="none" stroke="#fff" stroke-width="2.6" transform="rotate(-45 9.5 9.5)"><rect x="-1" y="5.5" width="11" height="8" rx="4"/><rect x="9" y="5.5" width="11" height="8" rx="4"/></g></svg>
<div style="position:absolute;left:2960px;top:1273px;width:80px;height:48px;background:repeating-linear-gradient(120deg,#0747a6 0px,#0747a6 30.1px,#09326c 30.1px,#09326c 60.2px);border-radius:8px 0 0 8px;"></div>
<svg style="position:absolute;left:2946px;top:1277px;overflow:visible;" width="40" height="40" viewBox="0 0 40 40"><circle cx="20" cy="20" r="20" fill="#172b4d"/><path d="M11 20 H28 M22 13.5 L28.5 20 L22 26.5" fill="none" stroke="#fff" stroke-width="3.8" stroke-linecap="round" stroke-linejoin="round"/></svg>
<svg style="position:absolute;left:2946px;top:1357px;overflow:visible;" width="40" height="40" viewBox="0 0 40 40"><circle cx="20" cy="20" r="20" fill="#172b4d"/><path d="M11 20 H28 M22 13.5 L28.5 20 L22 26.5" fill="none" stroke="#fff" stroke-width="3.8" stroke-linecap="round" stroke-linejoin="round"/></svg>
<div style="position:absolute;left:2032px;top:1433px;width:1008px;height:48px;background:repeating-linear-gradient(120deg,#0747a6 0px,#0747a6 30.1px,#09326c 30.1px,#09326c 60.2px);border-radius:8px 0 0 8px;"></div>
<svg style="position:absolute;left:2956px;top:1449.5px;overflow:visible;" width="20" height="16" viewBox="0 0 20 16"><path d="M2 8 H17 M11 2 L17 8 L11 14" fill="none" stroke="#fff" stroke-width="3.8" stroke-linecap="round" stroke-linejoin="round"/></svg>
<svg style="position:absolute;left:2946px;top:1517px;overflow:visible;" width="40" height="40" viewBox="0 0 40 40"><circle cx="20" cy="20" r="20" fill="#172b4d"/><path d="M11 20 H28 M22 13.5 L28.5 20 L22 26.5" fill="none" stroke="#fff" stroke-width="3.8" stroke-linecap="round" stroke-linejoin="round"/></svg>
<div style="position:absolute;left:2960px;top:1593px;width:80px;height:48px;background:repeating-linear-gradient(120deg,#44546f 0px,#44546f 30.1px,#2c3a52 30.1px,#2c3a52 60.2px);border-radius:8px 0 0 8px;"></div>
<svg style="position:absolute;left:2946px;top:1597px;overflow:visible;" width="40" height="40" viewBox="0 0 40 40"><circle cx="20" cy="20" r="20" fill="#172b4d"/><path d="M11 20 H28 M22 13.5 L28.5 20 L22 26.5" fill="none" stroke="#fff" stroke-width="3.8" stroke-linecap="round" stroke-linejoin="round"/></svg>
<svg style="position:absolute;left:2946px;top:1677px;overflow:visible;" width="40" height="40" viewBox="0 0 40 40"><circle cx="20" cy="20" r="20" fill="#172b4d"/><path d="M11 20 H28 M22 13.5 L28.5 20 L22 26.5" fill="none" stroke="#fff" stroke-width="3.8" stroke-linecap="round" stroke-linejoin="round"/></svg>
<div style="position:absolute;left:2120px;top:484px;width:4px;height:1247px;background:#f99f31;border-radius:0px;"></div>
<svg style="position:absolute;left:2114px;top:484px;overflow:visible;" width="16" height="13" viewBox="0 0 16 13"><path d="M0 0 H16 L8 13 Z" fill="#f99f31"/></svg>
<div style="position:absolute;left:2397px;top:1619px;width:64px;height:64px;background:#fff;border-radius:6px;box-shadow:0 0 2px rgba(9,30,66,0.31),0 16px 24px rgba(9,30,66,0.15)"></div>
<svg style="position:absolute;left:2420px;top:1640px;overflow:visible;" width="14" height="22" viewBox="0 0 14 22"><path d="M10.5 2.5 L3 11 L10.5 19.5" fill="none" stroke="#172b4d" stroke-width="4" stroke-linecap="round" stroke-linejoin="round"/></svg>
<div style="position:absolute;left:2469px;top:1619px;width:64px;height:64px;background:#fff;border-radius:6px;box-shadow:0 0 2px rgba(9,30,66,0.31),0 16px 24px rgba(9,30,66,0.15)"></div>
<svg style="position:absolute;left:2494px;top:1640px;overflow:visible;" width="14" height="22" viewBox="0 0 14 22"><path d="M3.5 2.5 L11 11 L3.5 19.5" fill="none" stroke="#172b4d" stroke-width="4" stroke-linecap="round" stroke-linejoin="round"/></svg>
<div style="position:absolute;left:2549px;top:1619px;width:128px;height:64px;background:#fff;border-radius:6px;box-shadow:0 0 2px rgba(9,30,66,0.31),0 16px 24px rgba(9,30,66,0.15)"></div>
<div class="t" style="position:absolute;left:2574.5px;top:1634.3px;line-height:36px;font-size:28px;font-weight:400;font-style:normal;color:#172b4d;letter-spacing:0.57px;white-space:pre;-webkit-text-stroke:0.8px #172b4d;">Today</div>
<div style="position:absolute;left:2693px;top:1619px;width:203px;height:64px;background:#fff;border-radius:6px;box-shadow:0 0 2px rgba(9,30,66,0.31),0 16px 24px rgba(9,30,66,0.15)"></div>
<div class="t" style="position:absolute;left:2717.7px;top:1634.3px;line-height:36px;font-size:28px;font-weight:400;font-style:normal;color:#172b4d;letter-spacing:0.97px;white-space:pre;-webkit-text-stroke:0.8px #172b4d;">Months</div>
<svg style="position:absolute;left:2839px;top:1647px;overflow:visible;" width="17" height="12" viewBox="0 0 17 12"><path d="M2.5 2.5 L8.5 8.5 L14.5 2.5" fill="none" stroke="#172b4d" stroke-width="4" stroke-linecap="round" stroke-linejoin="round"/></svg>
<div style="position:absolute;left:2912px;top:1619px;width:64px;height:64px;background:#fff;border-radius:6px;box-shadow:0 0 2px rgba(9,30,66,0.31),0 16px 24px rgba(9,30,66,0.15)"></div>
<svg style="position:absolute;left:2927px;top:1634px;overflow:visible;" width="34" height="34" viewBox="0 0 34 34"><g fill="none" stroke="#172b4d" stroke-width="4" stroke-linecap="round" stroke-linejoin="round"><path d="M20 5 H29 V14 M29 5 L19 15"/><path d="M14 29 H5 V20 M5 29 L15 19"/></g></svg>
<div style="position:absolute;left:2370px;top:1711px;width:42px;height:22px;background:rgba(120,120,120,0.6);border-radius:11px;"></div>
</body></html>
